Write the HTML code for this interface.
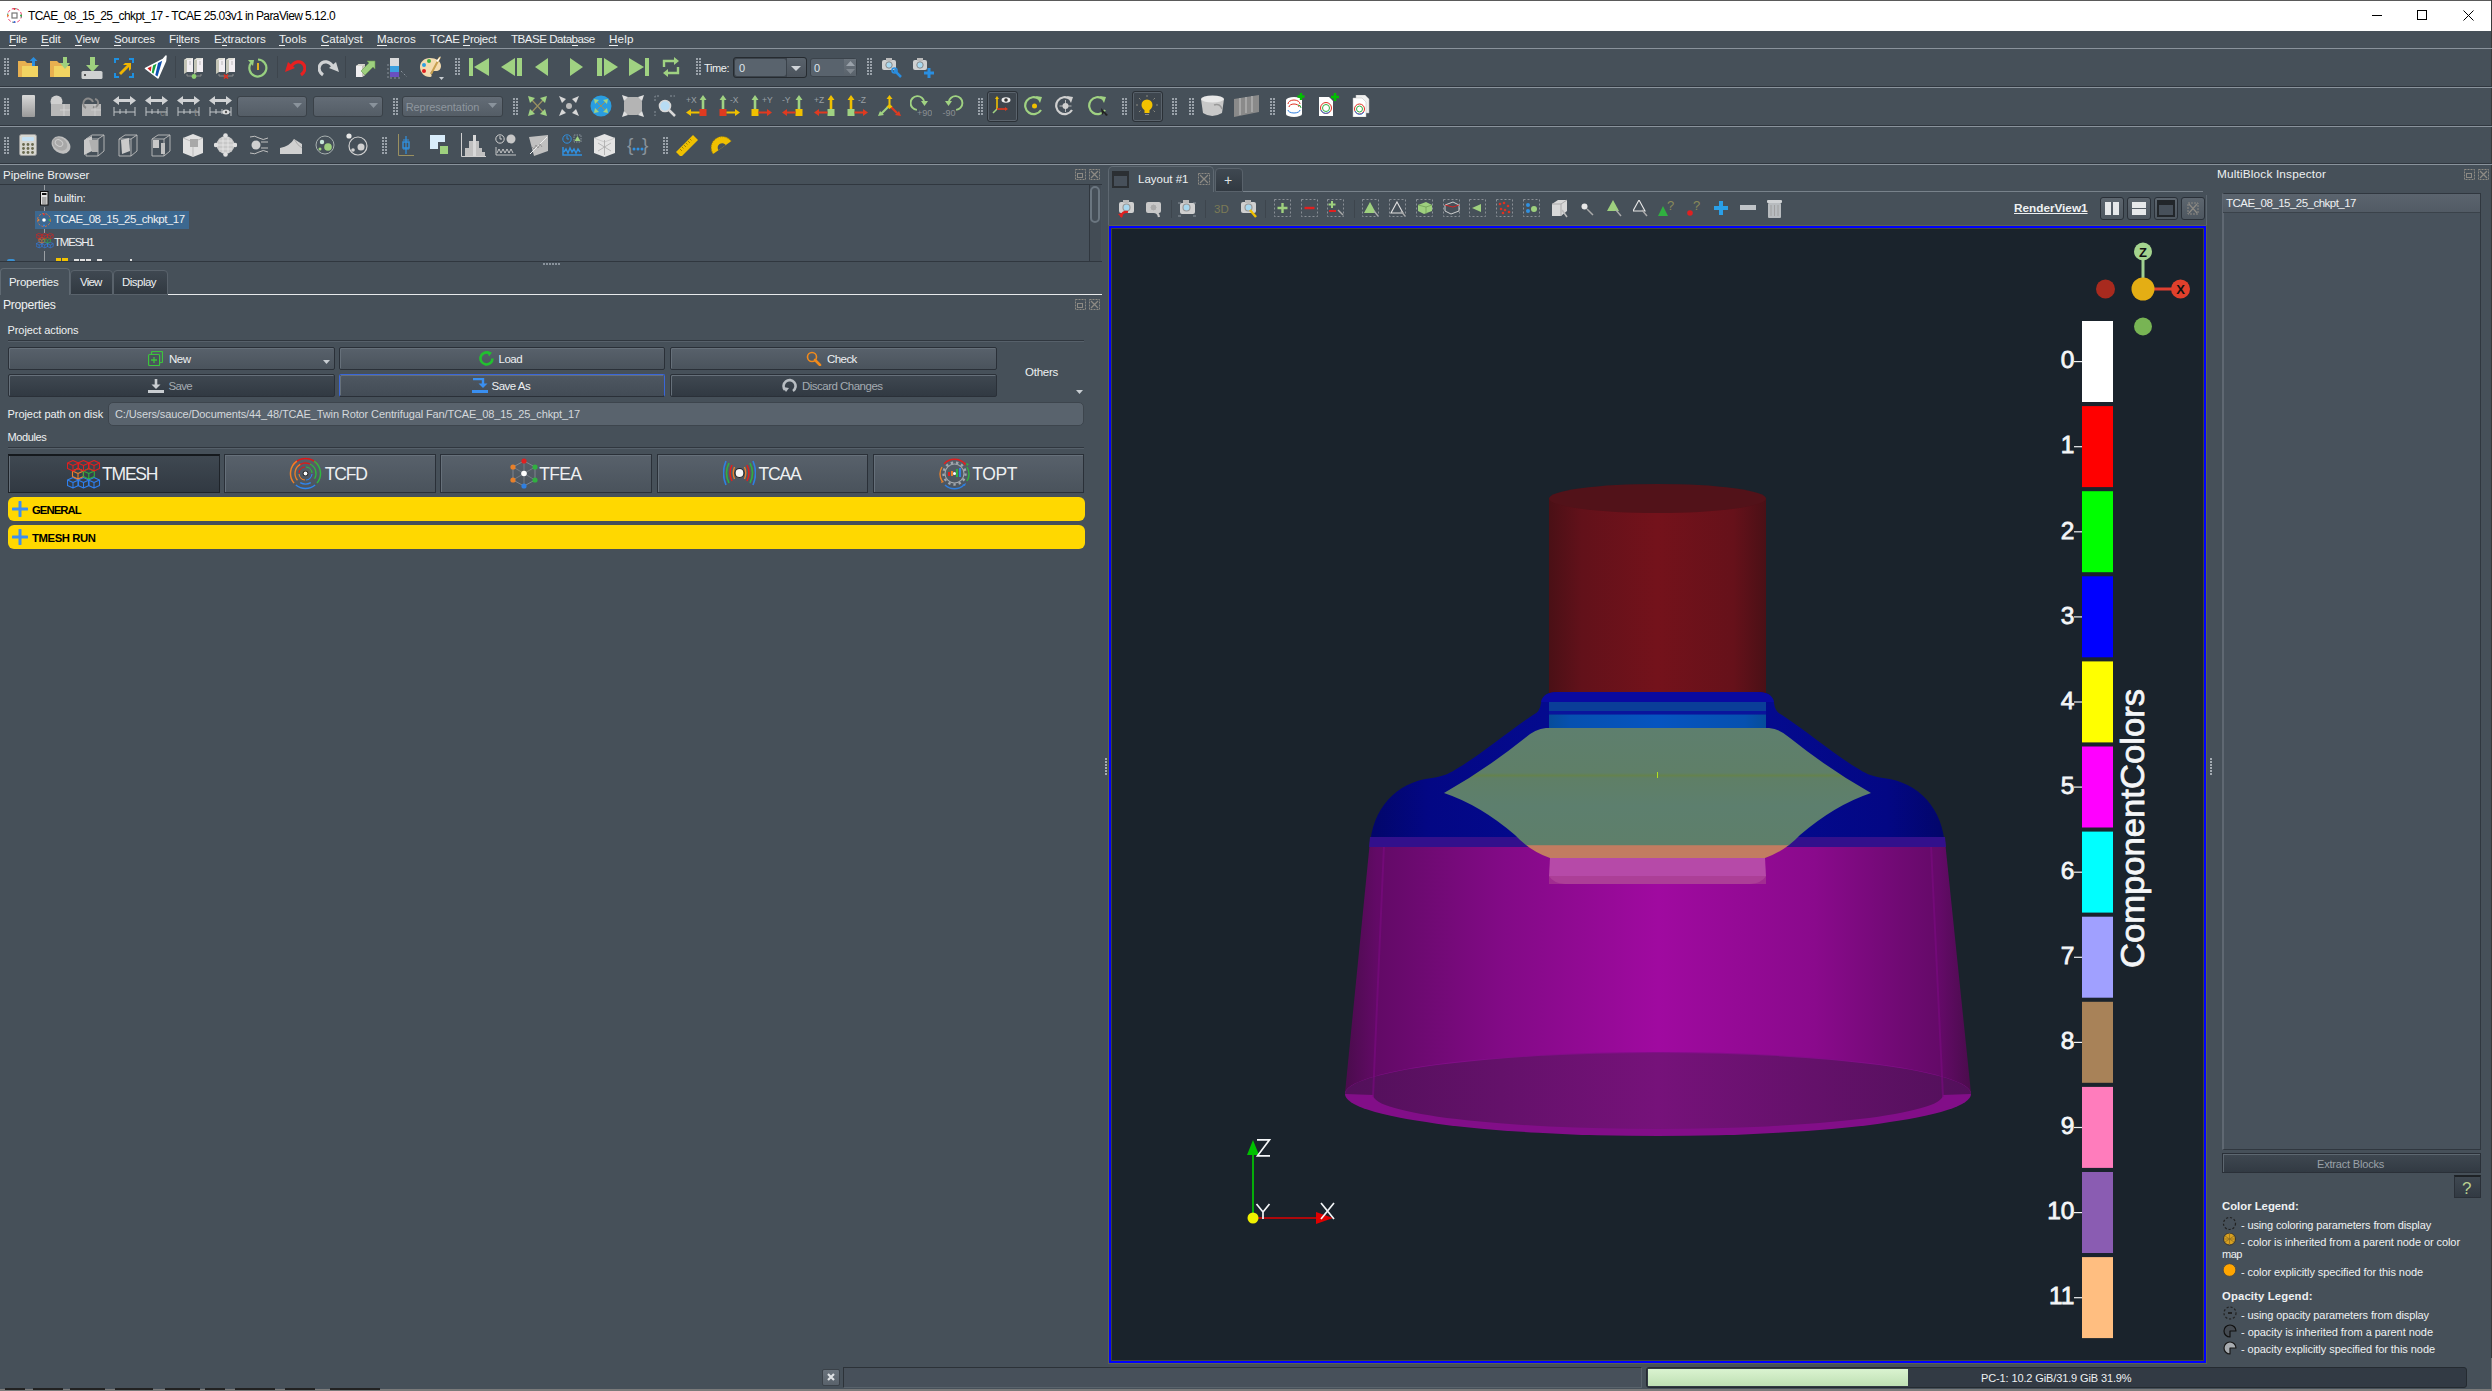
<!DOCTYPE html>
<html><head><meta charset="utf-8">
<style>
*{box-sizing:border-box;margin:0;padding:0}
html,body{width:2492px;height:1391px;overflow:hidden;background:#465059;font-family:"Liberation Sans",sans-serif;font-size:11px;color:#eef0f2}
.a{position:absolute}
.t{position:absolute;white-space:nowrap;line-height:1}
u{text-decoration:none;border-bottom:1px solid currentColor}
</style></head><body>

<div class="a" style="left:0px;top:0px;width:2492px;height:31px;background:#fff"></div>
<div class="a" style="left:0px;top:0px;width:2492px;height:1px;background:#5a5a5a"></div>
<div class="a" style="left:2491px;top:0px;width:1px;height:1358px;background:#3a3a3a"></div>
<div class="a" style="left:2491px;top:1358px;width:1px;height:33px;background:#7a7a7a"></div>
<div class="t" style="left:28px;top:9.84px;font-size:12px;color:#000;letter-spacing:-0.586px">TCAE_08_15_25_chkpt_17 - TCAE 25.03v1 in ParaView 5.12.0</div>
<svg class="a" style="left:6px;top:7px" width="17" height="17" viewBox="0 0 17 17"><circle cx="8.5" cy="8.5" r="7" fill="none" stroke="#e36" stroke-width="1" stroke-dasharray="3 2"/><circle cx="8.5" cy="8.5" r="7" fill="none" stroke="#3a8" stroke-width="1" stroke-dasharray="2 9" /><rect x="6" y="6" width="5" height="5" fill="none" stroke="#777" stroke-width="1.2"/><circle cx="8.5" cy="2" r="1" fill="#d33"/><circle cx="8.5" cy="15" r="1" fill="#36d"/><circle cx="2" cy="8.5" r="1" fill="#e83"/><circle cx="15" cy="8.5" r="1" fill="#3a4"/></svg>
<div class="a" style="left:2372px;top:15px;width:10px;height:1px;background:#000"></div>
<div class="a" style="left:2417px;top:10px;width:10px;height:10px;border:1px solid #000"></div>
<svg class="a" style="left:2463px;top:10px" width="11" height="11" viewBox="0 0 11 11"><path d="M0.5 0.5L10.5 10.5M10.5 0.5L0.5 10.5" stroke="#000" stroke-width="1"/></svg>
<div class="t" style="left:9px;top:33.18px;font-size:11.6px;;letter-spacing:-0.173px"><u>F</u>ile</div>
<div class="t" style="left:41px;top:33.18px;font-size:11.6px;;letter-spacing:-0.072px"><u>E</u>dit</div>
<div class="t" style="left:75px;top:33.18px;font-size:11.6px;;letter-spacing:-0.134px"><u>V</u>iew</div>
<div class="t" style="left:114px;top:33.18px;font-size:11.6px;;letter-spacing:-0.265px"><u>S</u>ources</div>
<div class="t" style="left:169px;top:33.18px;font-size:11.6px;;letter-spacing:-0.140px">Fi<u>l</u>ters</div>
<div class="t" style="left:214px;top:33.18px;font-size:11.6px;;letter-spacing:-0.051px">E<u>x</u>tractors</div>
<div class="t" style="left:279px;top:33.18px;font-size:11.6px;;letter-spacing:0.144px"><u>T</u>ools</div>
<div class="t" style="left:321px;top:33.18px;font-size:11.6px;;letter-spacing:-0.038px"><u>C</u>atalyst</div>
<div class="t" style="left:377px;top:33.18px;font-size:11.6px;;letter-spacing:0.162px"><u>M</u>acros</div>
<div class="t" style="left:430px;top:33.18px;font-size:11.6px;;letter-spacing:-0.330px">TCAE <u>P</u>roject</div>
<div class="t" style="left:511px;top:33.18px;font-size:11.6px;;letter-spacing:-0.515px">TBASE Data<u>b</u>ase</div>
<div class="t" style="left:609px;top:33.18px;font-size:11.6px;;letter-spacing:0.211px"><u>H</u>elp</div>
<div class="a" style="left:0px;top:48px;width:2492px;height:1px;background:#8a939c"></div>
<div class="a" style="left:0px;top:86px;width:2492px;height:1px;background:#30373f"></div>
<div class="a" style="left:0px;top:87px;width:2492px;height:1px;background:#8a939c"></div>
<div class="a" style="left:0px;top:125px;width:2492px;height:1px;background:#30373f"></div>
<div class="a" style="left:0px;top:126px;width:2492px;height:1px;background:#8a939c"></div>
<div class="a" style="left:0px;top:163px;width:2492px;height:1px;background:#30373f"></div>
<div class="a" style="left:0px;top:164px;width:2492px;height:1px;background:#8a939c"></div>
<div class="t" style="left:3px;top:170.27px;font-size:11.5px;;letter-spacing:0.007px">Pipeline Browser</div>
<svg class="a" style="left:1074px;top:168px" width="13" height="13" viewBox="0 0 13 13"><rect x="1.5" y="1.5" width="10" height="10" fill="none" stroke="#8d8a84" stroke-width="1" stroke-dasharray="2 1"/><rect x="3.5" y="5.5" width="5" height="4" fill="none" stroke="#8d8a84"/></svg>
<svg class="a" style="left:1088px;top:168px" width="13" height="13" viewBox="0 0 13 13"><rect x="1.5" y="1.5" width="10" height="10" fill="none" stroke="#8d8a84" stroke-width="1" stroke-dasharray="2 1"/><path d="M3 3L10 10M10 3L3 10" stroke="#8d8a84" stroke-width="1.3"/></svg>
<div class="a" style="left:0px;top:184px;width:1102px;height:78px;background:#47515b;border-top:1px solid #30373f;border-bottom:1px solid #30373f"></div>
<div class="a" style="left:1089px;top:185px;width:12px;height:76px;background:#434c55;border-left:1px solid #30373f"></div>
<div class="a" style="left:1090px;top:186px;width:10px;height:37px;border:2px solid #6b7680;border-radius:5px;background:#454e57"></div>
<div class="a" style="left:44px;top:185px;width:1px;height:5px;background:#9a9fa4"></div>
<div class="a" style="left:44px;top:207px;width:1px;height:4px;background:#9a9fa4"></div>
<div class="a" style="left:44px;top:229px;width:1px;height:4px;background:#9a9fa4"></div>
<div class="a" style="left:44px;top:251px;width:1px;height:10px;background:#9a9fa4"></div>
<svg class="a" style="left:40px;top:191px" width="9" height="15" viewBox="0 0 9 15"><rect x="0.5" y="0.5" width="7.5" height="13.5" fill="#e4e4e4" stroke="#111"/><rect x="2" y="2" width="4.5" height="2" fill="#111"/><rect x="2" y="6" width="4.5" height="7" fill="#a8a8a8"/></svg>
<div class="t" style="left:54px;top:193.27px;font-size:11.5px;;letter-spacing:-0.205px">builtin:</div>
<div class="a" style="left:35px;top:211px;width:154px;height:18px;background:#3c6890"></div>
<svg class="a" style="left:36px;top:212px" width="16" height="16" viewBox="0 0 16 16"><circle cx="8" cy="8" r="6.5" fill="none" stroke="#e0703a" stroke-width="1" stroke-dasharray="2 1.5"/><circle cx="8" cy="8" r="1.8" fill="#fff"/><circle cx="8" cy="2.5" r="1" fill="#d33"/><circle cx="13.5" cy="8" r="1" fill="#3b4"/><circle cx="8" cy="13.5" r="1" fill="#38e"/><circle cx="2.5" cy="8" r="1" fill="#e83"/></svg>
<div class="t" style="left:54px;top:214.27px;font-size:11.5px;;letter-spacing:-0.487px">TCAE_08_15_25_chkpt_17</div>
<svg class="a" style="left:36px;top:233px" width="19" height="16" viewBox="0 0 19 16"><g transform="scale(0.53)"><path d="M6 17.5L11.5 20.0V25.5L6 28.0L0.5 25.5V20.0Z M0.5 20.0L6 22.5L11.5 20.0M6 22.5V28.0" fill="none" stroke="#2f80f0" stroke-width="1.1" stroke-linejoin="round"/><path d="M16.5 17.5L22.0 20.0V25.5L16.5 28.0L11.0 25.5V20.0Z M11.0 20.0L16.5 22.5L22.0 20.0M16.5 22.5V28.0" fill="none" stroke="#2f80f0" stroke-width="1.1" stroke-linejoin="round"/><path d="M27 17.5L32.5 20.0V25.5L27 28.0L21.5 25.5V20.0Z M21.5 20.0L27 22.5L32.5 20.0M27 22.5V28.0" fill="none" stroke="#2f80f0" stroke-width="1.1" stroke-linejoin="round"/><path d="M11 8.5L16.5 11.0V16.5L11 19.0L5.5 16.5V11.0Z M5.5 11.0L11 13.5L16.5 11.0M11 13.5V19.0" fill="none" stroke="#f08030" stroke-width="1.1" stroke-linejoin="round"/><path d="M21.8 8.5L27.3 11.0V16.5L21.8 19.0L16.3 16.5V11.0Z M16.3 11.0L21.8 13.5L27.3 11.0M21.8 13.5V19.0" fill="none" stroke="#30b040" stroke-width="1.1" stroke-linejoin="round"/><path d="M6 0.5L11.5 3.0V8.5L6 11.0L0.5 8.5V3.0Z M0.5 3.0L6 5.5L11.5 3.0M6 5.5V11.0" fill="none" stroke="#e02020" stroke-width="1.1" stroke-linejoin="round"/><path d="M16.5 0.5L22.0 3.0V8.5L16.5 11.0L11.0 8.5V3.0Z M11.0 3.0L16.5 5.5L22.0 3.0M16.5 5.5V11.0" fill="none" stroke="#e02020" stroke-width="1.1" stroke-linejoin="round"/><path d="M27 0.5L32.5 3.0V8.5L27 11.0L21.5 8.5V3.0Z M21.5 3.0L27 5.5L32.5 3.0M27 5.5V11.0" fill="none" stroke="#e02020" stroke-width="1.1" stroke-linejoin="round"/></g></svg>
<div class="t" style="left:54px;top:237.27px;font-size:11.5px;;letter-spacing:-1.191px">TMESH1</div>
<div class="a" style="left:56px;top:258px;width:5px;height:3px;background:#f2c200"></div>
<div class="a" style="left:62px;top:258px;width:6px;height:3px;background:#f2c200"></div>
<div class="a" style="left:74px;top:259px;width:5px;height:2px;background:#e0e0e0"></div>
<div class="a" style="left:80px;top:259px;width:5px;height:2px;background:#e0e0e0"></div>
<div class="a" style="left:86px;top:259px;width:5px;height:2px;background:#e0e0e0"></div>
<div class="a" style="left:97px;top:259px;width:5px;height:2px;background:#e0e0e0"></div>
<div class="a" style="left:130px;top:259px;width:2px;height:2px;background:#e0e0e0"></div>
<div class="a" style="left:7px;top:259px;width:8px;height:2px;background:#3a8fd0;border-radius:3px 3px 0 0"></div>
<svg class="a" style="left:543px;top:263px" width="20" height="3" viewBox="0 0 20 3"><rect x="0" y="0" width="2" height="2" fill="#8a939c"/><rect x="3" y="0" width="2" height="2" fill="#8a939c"/><rect x="6" y="0" width="2" height="2" fill="#8a939c"/><rect x="9" y="0" width="2" height="2" fill="#8a939c"/><rect x="12" y="0" width="2" height="2" fill="#8a939c"/><rect x="15" y="0" width="2" height="2" fill="#8a939c"/></svg>
<div class="a" style="left:0px;top:268px;width:70px;height:27px;background:#465059;border:1px solid #5f6972;border-bottom:none;border-radius:4px 4px 0 0"></div>
<div class="a" style="left:70px;top:270px;width:43px;height:25px;background:linear-gradient(#3f4851,#313941);border:1px solid #59626b;border-radius:4px 4px 0 0"></div>
<div class="a" style="left:113px;top:270px;width:55px;height:25px;background:linear-gradient(#3f4851,#313941);border:1px solid #59626b;border-radius:4px 4px 0 0"></div>
<div class="a" style="left:168px;top:294px;width:934px;height:1px;background:#e8eaec"></div>
<div class="t" style="left:9px;top:277.27px;font-size:11.5px;;letter-spacing:-0.301px">Properties</div>
<div class="t" style="left:80px;top:277.27px;font-size:11.5px;;letter-spacing:-0.805px">View</div>
<div class="t" style="left:122px;top:277.27px;font-size:11.5px;;letter-spacing:-0.515px">Display</div>
<div class="t" style="left:3px;top:298.67px;font-size:12.2px;;letter-spacing:-0.301px">Properties</div>
<svg class="a" style="left:1074px;top:298px" width="13" height="13" viewBox="0 0 13 13"><rect x="1.5" y="1.5" width="10" height="10" fill="none" stroke="#8d8a84" stroke-width="1" stroke-dasharray="2 1"/><rect x="3.5" y="5.5" width="5" height="4" fill="none" stroke="#8d8a84"/></svg>
<svg class="a" style="left:1088px;top:298px" width="13" height="13" viewBox="0 0 13 13"><rect x="1.5" y="1.5" width="10" height="10" fill="none" stroke="#8d8a84" stroke-width="1" stroke-dasharray="2 1"/><path d="M3 3L10 10M10 3L3 10" stroke="#8d8a84" stroke-width="1.3"/></svg>
<div class="t" style="left:7.5px;top:324.69px;font-size:11px;;letter-spacing:-0.076px">Project actions</div>
<div class="a" style="left:8px;top:340px;width:1076px;height:1px;background:#30373f"></div>
<div class="a" style="left:8px;top:341px;width:1076px;height:1px;background:#56606a"></div>
<div class="a" style="left:8px;top:347px;width:327px;height:23px;background:linear-gradient(#58616b,#4a535c);border:1px solid #2a3038;border-radius:2px;box-shadow:inset 1px 1px 0 #66707a"></div>
<div class="a" style="left:339px;top:347px;width:326px;height:23px;background:linear-gradient(#58616b,#4a535c);border:1px solid #2a3038;border-radius:2px;box-shadow:inset 1px 1px 0 #66707a"></div>
<div class="a" style="left:670px;top:347px;width:327px;height:23px;background:linear-gradient(#58616b,#4a535c);border:1px solid #2a3038;border-radius:2px;box-shadow:inset 1px 1px 0 #66707a"></div>
<div class="a" style="left:8px;top:374px;width:327px;height:23px;background:linear-gradient(#3f4851,#313942);border:1px solid #2a3038;border-radius:2px;box-shadow:inset 1px 1px 0 #66707a"></div>
<div class="a" style="left:339px;top:374px;width:326px;height:23px;background:linear-gradient(#4e5761,#434c56);border:1px solid #2a3038;border-radius:2px;box-shadow:inset 1px 1px 0 #66707a"></div>
<div class="a" style="left:339px;top:374px;width:326px;height:23px;border:1px solid #3a66d8;border-bottom-color:#2a3038;border-radius:2px"></div>
<div class="a" style="left:670px;top:374px;width:327px;height:23px;background:linear-gradient(#3f4851,#313942);border:1px solid #2a3038;border-radius:2px;box-shadow:inset 1px 1px 0 #66707a"></div>
<svg class="a" style="left:148px;top:351px" width="15" height="15" viewBox="0 0 15 15"><rect x="3.5" y="0.5" width="11" height="11" fill="none" stroke="#3cc43c" stroke-width="1.2" rx="1"/><rect x="0.6" y="3.5" width="11" height="11" fill="#4a535c" stroke="#3cc43c" stroke-width="1.2" rx="1"/><path d="M6 6v6M3 9h6" stroke="#3cc43c" stroke-width="1.3"/></svg>
<div class="t" style="left:169px;top:354.27px;font-size:11.5px;;letter-spacing:-0.469px">New</div>
<svg class="a" style="left:323px;top:360px" width="7" height="4" viewBox="0 0 7 4"><path d="M0 0h7L3.5 4z" fill="#c8cdd2"/></svg>
<svg class="a" style="left:479px;top:351px" width="16" height="15" viewBox="0 0 16 15"><path d="M13.5 7.5A6 6 0 1 1 10 2" fill="none" stroke="#22c030" stroke-width="2.6"/><path d="M8 0l5 1.5-3 4z" fill="#22c030"/></svg>
<div class="t" style="left:498.5px;top:354.27px;font-size:11.5px;;letter-spacing:-0.496px">Load</div>
<svg class="a" style="left:806px;top:351px" width="16" height="15" viewBox="0 0 16 15"><circle cx="6" cy="6" r="4.5" fill="none" stroke="#f08a1c" stroke-width="1.6"/><path d="M9 9l5 5" stroke="#f08a1c" stroke-width="2.6" stroke-linecap="round"/></svg>
<div class="t" style="left:827px;top:354.27px;font-size:11.5px;;letter-spacing:-0.559px">Check</div>
<svg class="a" style="left:148px;top:379px" width="16" height="14" viewBox="0 0 16 14"><path d="M8 0v7" stroke="#c9cdd1" stroke-width="2.6"/><path d="M3.5 5.5h9L8 10z" fill="#c9cdd1"/><rect x="0" y="11" width="16" height="3" fill="#c9cdd1"/></svg>
<div class="t" style="left:168.5px;top:381.27px;font-size:11.5px;color:#a4abb2;letter-spacing:-0.653px">Save</div>
<svg class="a" style="left:472px;top:378px" width="16" height="15" viewBox="0 0 16 15"><path d="M1 1h10v5" fill="none" stroke="#3a8ff0" stroke-width="2.4"/><path d="M6.5 5.5h9L11 10z" fill="#3a8ff0"/><rect x="0" y="12" width="16" height="3" fill="#3a8ff0"/></svg>
<div class="t" style="left:491.5px;top:381.27px;font-size:11.5px;;letter-spacing:-0.485px">Save As</div>
<svg class="a" style="left:782px;top:378px" width="16" height="16" viewBox="0 0 16 16"><path d="M3 12A6 6 0 1 1 11 13" fill="none" stroke="#b8bdc2" stroke-width="2.6"/><path d="M1 9l3 5 3-4z" fill="#b8bdc2"/></svg>
<div class="t" style="left:802px;top:381.27px;font-size:11.5px;color:#a4abb2;letter-spacing:-0.514px">Discard Changes</div>
<div class="t" style="left:1025px;top:367.27px;font-size:11.5px;;letter-spacing:-0.252px">Others</div>
<svg class="a" style="left:1076px;top:390px" width="7" height="4" viewBox="0 0 7 4"><path d="M0 0h7L3.5 4z" fill="#c8cdd2"/></svg>
<div class="t" style="left:7.5px;top:408.69px;font-size:11px;;letter-spacing:-0.051px">Project path on disk</div>
<div class="a" style="left:108px;top:402px;width:976px;height:24px;background:#59636d;border:1px solid #3d454d;border-radius:5px"></div>
<div class="t" style="left:115px;top:408.69px;font-size:11px;color:#d4d8dc;letter-spacing:-0.119px">C:/Users/sauce/Documents/44_48/TCAE_Twin Rotor Centrifugal Fan/TCAE_08_15_25_chkpt_17</div>
<div class="t" style="left:7.5px;top:431.69px;font-size:11px;;letter-spacing:-0.368px">Modules</div>
<div class="a" style="left:8px;top:447px;width:1076px;height:1px;background:#30373f"></div>
<div class="a" style="left:8px;top:448px;width:1076px;height:1px;background:#56606a"></div>
<div class="a" style="left:8px;top:454px;width:212px;height:39px;background:linear-gradient(#3f4851,#313942);border:1px solid #1e2329;border-top:2px solid #15191d;box-shadow:inset 1px 0 0 #66707a"></div>
<div class="a" style="left:224px;top:454px;width:212px;height:39px;background:linear-gradient(#58616b,#4a535c);border:1px solid #2a3038;box-shadow:inset 1px 1px 0 #66707a"></div>
<div class="a" style="left:440px;top:454px;width:212px;height:39px;background:linear-gradient(#58616b,#4a535c);border:1px solid #2a3038;box-shadow:inset 1px 1px 0 #66707a"></div>
<div class="a" style="left:657px;top:454px;width:211px;height:39px;background:linear-gradient(#58616b,#4a535c);border:1px solid #2a3038;box-shadow:inset 1px 1px 0 #66707a"></div>
<div class="a" style="left:873px;top:454px;width:211px;height:39px;background:linear-gradient(#58616b,#4a535c);border:1px solid #2a3038;box-shadow:inset 1px 1px 0 #66707a"></div>
<svg class="a" style="left:67px;top:460px" width="35" height="30" viewBox="0 0 35 30"><g transform="scale(1.0)"><path d="M6 17.5L11.5 20.0V25.5L6 28.0L0.5 25.5V20.0Z M0.5 20.0L6 22.5L11.5 20.0M6 22.5V28.0" fill="none" stroke="#2f80f0" stroke-width="1.1" stroke-linejoin="round"/><path d="M16.5 17.5L22.0 20.0V25.5L16.5 28.0L11.0 25.5V20.0Z M11.0 20.0L16.5 22.5L22.0 20.0M16.5 22.5V28.0" fill="none" stroke="#2f80f0" stroke-width="1.1" stroke-linejoin="round"/><path d="M27 17.5L32.5 20.0V25.5L27 28.0L21.5 25.5V20.0Z M21.5 20.0L27 22.5L32.5 20.0M27 22.5V28.0" fill="none" stroke="#2f80f0" stroke-width="1.1" stroke-linejoin="round"/><path d="M11 8.5L16.5 11.0V16.5L11 19.0L5.5 16.5V11.0Z M5.5 11.0L11 13.5L16.5 11.0M11 13.5V19.0" fill="none" stroke="#f08030" stroke-width="1.1" stroke-linejoin="round"/><path d="M21.8 8.5L27.3 11.0V16.5L21.8 19.0L16.3 16.5V11.0Z M16.3 11.0L21.8 13.5L27.3 11.0M21.8 13.5V19.0" fill="none" stroke="#30b040" stroke-width="1.1" stroke-linejoin="round"/><path d="M6 0.5L11.5 3.0V8.5L6 11.0L0.5 8.5V3.0Z M0.5 3.0L6 5.5L11.5 3.0M6 5.5V11.0" fill="none" stroke="#e02020" stroke-width="1.1" stroke-linejoin="round"/><path d="M16.5 0.5L22.0 3.0V8.5L16.5 11.0L11.0 8.5V3.0Z M11.0 3.0L16.5 5.5L22.0 3.0M16.5 5.5V11.0" fill="none" stroke="#e02020" stroke-width="1.1" stroke-linejoin="round"/><path d="M27 0.5L32.5 3.0V8.5L27 11.0L21.5 8.5V3.0Z M21.5 3.0L27 5.5L32.5 3.0M27 5.5V11.0" fill="none" stroke="#e02020" stroke-width="1.1" stroke-linejoin="round"/></g></svg>
<div class="t" style="left:102px;top:466.19px;font-size:17.5px;;letter-spacing:-1.191px">TMESH</div>
<svg class="a" style="left:289px;top:457px" width="33" height="33" viewBox="0 0 33 33"><path d="M4.21 7.90A15 15 0 0 1 28.79 7.90" fill="none" stroke="#e01818" stroke-width="1.5"/><path d="M25.10 4.21A15 15 0 0 1 27.99 26.14" fill="none" stroke="#30b840" stroke-width="1.5"/><path d="M26.14 27.99A15 15 0 0 1 6.86 27.99" fill="none" stroke="#2f86f0" stroke-width="1.5"/><path d="M5.01 26.14A15 15 0 0 1 7.90 4.21" fill="none" stroke="#f08028" stroke-width="1.5"/><path d="M8.46 9.75A10.5 10.5 0 0 1 21.75 7.41" fill="none" stroke="#e01818" stroke-width="1.3"/><path d="M20.94 6.98A10.5 10.5 0 0 1 25.59 21.75" fill="none" stroke="#30b840" stroke-width="1.3"/><path d="M21.75 25.59A10.5 10.5 0 0 1 11.25 25.59" fill="none" stroke="#2f86f0" stroke-width="1.3"/><path d="M8.46 23.25A10.5 10.5 0 0 1 11.25 7.41" fill="none" stroke="#f08028" stroke-width="1.3"/><path d="M10.02 15.93A6.5 6.5 0 0 1 15.93 10.02" fill="none" stroke="#e01818" stroke-width="1.1"/><path d="M17.07 10.02A6.5 6.5 0 0 1 22.98 15.93" fill="none" stroke="#30b840" stroke-width="1.1"/><path d="M22.98 17.07A6.5 6.5 0 0 1 17.07 22.98" fill="none" stroke="#2f86f0" stroke-width="1.1"/><path d="M15.93 22.98A6.5 6.5 0 0 1 10.02 17.07" fill="none" stroke="#f08028" stroke-width="1.1"/><circle cx="16.5" cy="16.5" r="2.8" fill="#222"/><circle cx="16.5" cy="16.5" r="1.9" fill="#fff"/></svg>
<div class="t" style="left:324.7px;top:466.19px;font-size:17.5px;;letter-spacing:-1.164px">TCFD</div>
<svg class="a" style="left:509px;top:457px" width="30" height="33" viewBox="0 0 30 33"><path d="M15 4L26 10V23L15 29L4 23V10Z" fill="none" stroke="#8a9199" stroke-width="0.8"/><path d="M15 4V29M4 10L26 23M26 10L4 23" stroke="#8a9199" stroke-width="0.6"/><circle cx="15" cy="4" r="2.6" fill="#e02020"/><circle cx="26" cy="10" r="2.6" fill="#30b040"/><circle cx="26" cy="23" r="2.6" fill="#30b040"/><circle cx="15" cy="29" r="2.6" fill="#2f7fe0"/><circle cx="4" cy="23" r="2.6" fill="#e8802a"/><circle cx="4" cy="10" r="2.6" fill="#e8802a"/><circle cx="15" cy="16.5" r="2.8" fill="#fff"/></svg>
<div class="t" style="left:539.3px;top:466.19px;font-size:17.5px;;letter-spacing:-0.682px">TFEA</div>
<svg class="a" style="left:723px;top:459px" width="33" height="28" viewBox="0 0 33 28"><circle cx="16.5" cy="14" r="4.5" fill="#f4f4f4" stroke="#222" stroke-width="1.2"/><path d="M9 6Q5 14 9 22M24 6Q28 14 24 22" fill="none" stroke="#e02020" stroke-width="1.6"/><path d="M6 4Q1 14 6 24M27 4Q32 14 27 24" fill="none" stroke="#30b040" stroke-width="1.6"/><path d="M3 2Q-2 14 3 26M30 2Q35 14 30 26" fill="none" stroke="#2f7fe0" stroke-width="1.6"/><path d="M11.5 8Q9 14 11.5 20M21.5 8Q24 14 21.5 20" fill="none" stroke="#e8802a" stroke-width="1.4"/></svg>
<div class="t" style="left:758.4px;top:466.19px;font-size:17.5px;;letter-spacing:-1.094px">TCAA</div>
<svg class="a" style="left:938px;top:457px" width="33" height="33" viewBox="0 0 33 33"><path d="M6 7A14 14 0 0 1 27 7" fill="none" stroke="#e02020" stroke-width="1.4"/><path d="M29 10A14 14 0 0 1 29 24" fill="none" stroke="#30b040" stroke-width="1.4"/><path d="M26 28A14 14 0 0 1 7 28" fill="none" stroke="#2f7fe0" stroke-width="1.4"/><path d="M4 24A14 14 0 0 1 4 10" fill="none" stroke="#e8802a" stroke-width="1.4"/><path d="M25 5l3 1-1 3z" fill="#e02020"/><path d="M28 26l-1 3-3-1z" fill="#2f7fe0"/><path d="M3 26l1-3 2 2z" fill="#e8802a"/><path d="M29 9l-1-3 3 1z" fill="#30b040"/><circle cx="16.5" cy="16.5" r="9.5" fill="none" stroke="#a0a6ac" stroke-width="1.1"/><circle cx="16.5" cy="16.5" r="11" fill="none" stroke="#a0a6ac" stroke-width="2.4" stroke-dasharray="2.4 2.9"/><rect x="10" y="15" width="2" height="4" fill="#e02020"/><rect x="13" y="14" width="2" height="5" fill="#e8802a"/><rect x="18" y="12" width="2" height="8" fill="#30b040"/><rect x="21" y="11" width="2" height="9" fill="#2f7fe0"/><circle cx="16.5" cy="16.5" r="1.5" fill="#fff"/></svg>
<div class="t" style="left:972.3px;top:466.19px;font-size:17.5px;;letter-spacing:-0.412px">TOPT</div>
<div class="a" style="left:8px;top:497px;width:1077px;height:24px;background:#ffd800;border-radius:6px"></div>
<svg class="a" style="left:12px;top:501px" width="16" height="16" viewBox="0 0 16 16"><path d="M8 1v14M1 8h14" stroke="#3d8ef0" stroke-width="3" stroke-linecap="round"/></svg>
<div class="t" style="left:32px;top:504.73px;font-size:11.3px;color:#000;font-weight:bold;letter-spacing:-0.950px">GENERAL</div>
<div class="a" style="left:8px;top:525px;width:1077px;height:24px;background:#ffd800;border-radius:6px"></div>
<svg class="a" style="left:12px;top:529px" width="16" height="16" viewBox="0 0 16 16"><path d="M8 1v14M1 8h14" stroke="#3d8ef0" stroke-width="3" stroke-linecap="round"/></svg>
<div class="t" style="left:32px;top:532.73px;font-size:11.3px;color:#000;font-weight:bold;letter-spacing:-0.397px">TMESH RUN</div>
<svg class="a" style="left:1105px;top:758px" width="3" height="18" viewBox="0 0 3 18"><rect x="0" y="0" width="2" height="2" fill="#a4abb2"/><rect x="0" y="3" width="2" height="2" fill="#a4abb2"/><rect x="0" y="6" width="2" height="2" fill="#a4abb2"/><rect x="0" y="9" width="2" height="2" fill="#a4abb2"/><rect x="0" y="12" width="2" height="2" fill="#a4abb2"/><rect x="0" y="15" width="2" height="2" fill="#a4abb2"/></svg>
<svg class="a" style="left:2210px;top:758px" width="3" height="18" viewBox="0 0 3 18"><rect x="0" y="0" width="2" height="2" fill="#a4abb2"/><rect x="0" y="3" width="2" height="2" fill="#a4abb2"/><rect x="0" y="6" width="2" height="2" fill="#a4abb2"/><rect x="0" y="9" width="2" height="2" fill="#a4abb2"/><rect x="0" y="12" width="2" height="2" fill="#a4abb2"/><rect x="0" y="15" width="2" height="2" fill="#a4abb2"/></svg>
<div class="a" style="left:1108px;top:166px;width:106px;height:26px;background:#465059;border:1px solid #5f6972;border-bottom:none;border-radius:5px 5px 0 0"></div>
<div class="a" style="left:1215px;top:168px;width:28px;height:24px;background:linear-gradient(#3f4851,#313941);border:1px solid #59626b;border-radius:4px 4px 0 0"></div>
<div class="a" style="left:1243px;top:191px;width:960px;height:1px;background:#78828b"></div>
<svg class="a" style="left:1112px;top:171px" width="17" height="17" viewBox="0 0 17 17"><rect x="1" y="1" width="15" height="15" fill="#47505a" stroke="#2b2f33" stroke-width="2"/><rect x="0" y="0" width="17" height="5" fill="#2b2f33"/></svg>
<div class="t" style="left:1138px;top:174.27px;font-size:11.5px;;letter-spacing:-0.002px">Layout #1</div>
<svg class="a" style="left:1198px;top:173px" width="12" height="12" viewBox="0 0 12 12"><rect x="0.5" y="0.5" width="11" height="11" fill="none" stroke="#8d8a84" stroke-dasharray="2 1"/><path d="M2 2L10 10M10 2L2 10" stroke="#8d8a84" stroke-width="1.2"/></svg>
<div class="t" style="left:1224px;top:173.15px;font-size:14px;color:#dfe3e6">+</div>
<div class="a" style="left:1108px;top:191px;width:1px;height:35px;background:#5d6770"></div>
<div class="a" style="left:2206px;top:195px;width:1px;height:31px;background:#5d6770"></div>
<div class="t" style="left:2014px;top:203.01px;font-size:11.8px;font-weight:bold;text-decoration:underline;letter-spacing:-0.027px">RenderView1</div>
<div class="a" style="left:2100px;top:197px;width:24px;height:23px;background:linear-gradient(#5d666f,#4e5760);border:1px solid #2a3038;border-radius:3px"></div>
<svg class="a" style="left:2100px;top:197px" width="24" height="23" viewBox="0 0 24 23"><rect x="5" y="5" width="6" height="13" fill="#e6e8ea"/><rect x="13" y="5" width="6" height="13" fill="#e6e8ea"/></svg>
<div class="a" style="left:2127px;top:197px;width:24px;height:23px;background:linear-gradient(#5d666f,#4e5760);border:1px solid #2a3038;border-radius:3px"></div>
<svg class="a" style="left:2127px;top:197px" width="24" height="23" viewBox="0 0 24 23"><rect x="5" y="5" width="14" height="6" fill="#e6e8ea"/><rect x="5" y="12" width="14" height="6" fill="#e6e8ea"/></svg>
<div class="a" style="left:2154px;top:197px;width:24px;height:23px;background:linear-gradient(#5d666f,#4e5760);border:1px solid #2a3038;border-radius:3px"></div>
<svg class="a" style="left:2154px;top:197px" width="24" height="23" viewBox="0 0 24 23"><rect x="4" y="4" width="16" height="15" fill="#47505a" stroke="#22262a" stroke-width="2"/><rect x="4" y="4" width="16" height="4" fill="#22262a"/></svg>
<div class="a" style="left:2181px;top:197px;width:24px;height:23px;background:linear-gradient(#5d666f,#4e5760);border:1px solid #2a3038;border-radius:3px"></div>
<svg class="a" style="left:2181px;top:197px" width="24" height="23" viewBox="0 0 24 23"><rect x="7" y="6" width="10" height="11" fill="none" stroke="#8d8a84" stroke-dasharray="2 1"/><path d="M8 7L16 16M16 7L8 16" stroke="#8d8a84" stroke-width="1.2"/></svg>
<div class="a" style="left:1108px;top:225px;width:1099px;height:1139px;border:1px solid #5b6150"></div>
<div class="a" style="left:1109px;top:226px;width:1097px;height:1137px;background:#1a232c;border:2px solid #0000ff;box-shadow:inset 0 0 0 1px #3e4536"></div>
<svg class="a" style="left:0;top:0" width="2492" height="1391" viewBox="0 0 2492 1391"><clipPath id="rv"><rect x="1111" y="228" width="1093" height="1133"/></clipPath><g clip-path="url(#rv)">
<defs>
<linearGradient id="gMag" gradientUnits="userSpaceOnUse" x1="1345" y1="0" x2="1971" y2="0">
 <stop offset="0" stop-color="#4a0c4c"/><stop offset="0.05" stop-color="#620a66"/><stop offset="0.25" stop-color="#820a86"/><stop offset="0.5" stop-color="#a00aa0"/><stop offset="0.75" stop-color="#8a0a8c"/><stop offset="0.95" stop-color="#640a68"/><stop offset="1" stop-color="#4a0c4c"/>
</linearGradient>
<linearGradient id="gMagB" gradientUnits="userSpaceOnUse" x1="1345" y1="0" x2="1971" y2="0">
 <stop offset="0" stop-color="#52105a"/><stop offset="0.5" stop-color="#76127a"/><stop offset="1" stop-color="#52105a"/>
</linearGradient>
<linearGradient id="gRed" gradientUnits="userSpaceOnUse" x1="1549" y1="0" x2="1766" y2="0">
 <stop offset="0" stop-color="#4a1016"/><stop offset="0.15" stop-color="#62111a"/><stop offset="0.5" stop-color="#74121b"/><stop offset="0.85" stop-color="#66111a"/><stop offset="1" stop-color="#4a1016"/>
</linearGradient>
<linearGradient id="gBlue" gradientUnits="userSpaceOnUse" x1="1371" y1="0" x2="1944" y2="0">
 <stop offset="0" stop-color="#02066a"/><stop offset="0.1" stop-color="#030784"/><stop offset="0.3" stop-color="#040a8e"/><stop offset="0.5" stop-color="#040c98"/><stop offset="0.7" stop-color="#040a8e"/><stop offset="0.9" stop-color="#030784"/><stop offset="1" stop-color="#02066a"/>
</linearGradient>
<linearGradient id="gGreen" gradientUnits="userSpaceOnUse" x1="0" y1="728" x2="0" y2="858">
 <stop offset="0" stop-color="#5e7f6e"/><stop offset="0.345" stop-color="#5f7f68"/><stop offset="0.365" stop-color="#64824e"/><stop offset="0.385" stop-color="#5f7f66"/><stop offset="0.6" stop-color="#5d7f6e"/><stop offset="0.9" stop-color="#5e7f6a"/><stop offset="0.905" stop-color="#c27c60"/><stop offset="1" stop-color="#c27c62"/>
</linearGradient>
<linearGradient id="gCyan" gradientUnits="userSpaceOnUse" x1="1549" y1="0" x2="1766" y2="0"><stop offset="0" stop-color="#064c9a"/><stop offset="0.1" stop-color="#0650b0"/><stop offset="0.5" stop-color="#0654c0"/><stop offset="0.9" stop-color="#0650b0"/><stop offset="1" stop-color="#064c9a"/></linearGradient>
</defs>
<path d="M1370 841 L1945 841 L1971 1093 A313 42 0 0 1 1345 1093 Z" fill="url(#gMag)"/><ellipse cx="1658" cy="1094" rx="313" ry="42" fill="#820e88"/><path d="M1345 1094 A313 41 0 0 1 1971 1094 L1943 1095 A285 34 0 0 1 1373 1095 Z" fill="url(#gMagB)"/><path d="M1384 845 L1373 1097" stroke="#7c0a82" stroke-width="2" opacity="0.6"/><path d="M1931 845 L1943 1097" stroke="#7c0a82" stroke-width="2" opacity="0.6"/><rect x="1549" y="498" width="217" height="200" fill="url(#gRed)"/><ellipse cx="1657.5" cy="498.5" rx="108.5" ry="14.5" fill="#521219"/><path d="M1557 692 Q1543 692 1541 703 Q1540 712 1533 715 C1510 730 1480 755 1458 768 C1450 773 1445 776 1432 778 C1395 782 1372 810 1370 846 L1945 846 C1943 810 1920 782 1883 778 C1870 776 1865 773 1857 768 C1835 755 1805 730 1782 715 Q1775 712 1774 703 Q1772 692 1758 692 Z" fill="url(#gBlue)"/><path d="M1370 837 L1945 837 L1946 847 L1369 847 Z" fill="#32108c"/><path d="M1557 692 L1758 692 Q1772 692 1774 702 L1541 702 Q1543 692 1557 692Z" fill="#0a0aa0"/><rect x="1549" y="702" width="217" height="9" fill="#0a3e98"/><rect x="1549" y="711" width="217" height="3.5" fill="#0a149c"/><rect x="1549" y="714.5" width="217" height="14" fill="url(#gCyan)"/><path d="M1546 728 L1769 728 Q1780 729 1790 738 Q1830 770 1871 793 Q1835 805 1800 835 Q1785 851 1765 858 L1550 858 Q1530 851 1515 835 Q1480 805 1444 793 Q1485 770 1525 738 Q1535 729 1546 728 Z" fill="url(#gGreen)"/><path d="M1550 858 L1765 858 L1766 876 Q1762 883 1750 884 L1565 884 Q1553 883 1549 876 Z" fill="#b64aa8"/><rect x="1549" y="876" width="217" height="8" fill="#a83a90" opacity="0.7"/><rect x="1657" y="772" width="1" height="6" fill="#b0e020"/><path d="M1253 1218 L1253 1153" stroke="#00d000" stroke-width="1.6"/><path d="M1247 1155 L1253 1140 L1259 1155 Z" fill="#00c000"/><path d="M1253 1218 L1318 1218" stroke="#e00000" stroke-width="1.6"/><path d="M1316 1212 L1333 1218 L1316 1224 Z" fill="#e00000"/><circle cx="1253" cy="1218" r="5.5" fill="#f0f000"/><path d="M1257 1139.8H1269.5L1257.5 1155.8H1270" fill="none" stroke="#f4f6f8" stroke-width="1.7"/><path d="M1256.5 1204L1263 1212L1269.5 1204M1263 1212V1219" fill="none" stroke="#f4f6f8" stroke-width="1.7"/><path d="M1321 1203L1334 1219M1334 1203L1321 1219" fill="none" stroke="#f4f6f8" stroke-width="1.7"/><path d="M2143 289 L2143 252" stroke="#a0d090" stroke-width="3"/><path d="M2143 289 L2180 289" stroke="#e04030" stroke-width="3"/><circle cx="2105.5" cy="289" r="9.5" fill="#a82a1e"/><circle cx="2143" cy="326.5" r="9" fill="#78b454"/><circle cx="2143" cy="289" r="11.5" fill="#e4ae14"/><circle cx="2143" cy="251.5" r="9" fill="#a4d48e"/><circle cx="2180.5" cy="289" r="9.5" fill="#e0402c"/><text x="2143" y="256.5" text-anchor="middle" font-family="Liberation Sans" font-weight="bold" font-size="13" fill="#111">Z</text><text x="2180.5" y="294" text-anchor="middle" font-family="Liberation Sans" font-weight="bold" font-size="13" fill="#111">X</text><rect x="2082" y="321.0" width="31" height="81" fill="#ffffff"/><rect x="2074" y="361.0" width="8" height="1.2" fill="#eef0f2"/><text x="2074.5" y="368.3" text-anchor="end" font-family="Liberation Sans" font-size="24.5" fill="#f4f6f8" stroke="#f4f6f8" stroke-width="0.8">0</text><rect x="2082" y="406.1" width="31" height="81" fill="#ff0000"/><rect x="2074" y="446.1" width="8" height="1.2" fill="#eef0f2"/><text x="2074.5" y="453.40000000000003" text-anchor="end" font-family="Liberation Sans" font-size="24.5" fill="#f4f6f8" stroke="#f4f6f8" stroke-width="0.8">1</text><rect x="2082" y="491.2" width="31" height="81" fill="#00ff00"/><rect x="2074" y="531.2" width="8" height="1.2" fill="#eef0f2"/><text x="2074.5" y="538.5" text-anchor="end" font-family="Liberation Sans" font-size="24.5" fill="#f4f6f8" stroke="#f4f6f8" stroke-width="0.8">2</text><rect x="2082" y="576.3" width="31" height="81" fill="#0000ff"/><rect x="2074" y="616.3" width="8" height="1.2" fill="#eef0f2"/><text x="2074.5" y="623.5999999999999" text-anchor="end" font-family="Liberation Sans" font-size="24.5" fill="#f4f6f8" stroke="#f4f6f8" stroke-width="0.8">3</text><rect x="2082" y="661.4" width="31" height="81" fill="#ffff00"/><rect x="2074" y="701.4" width="8" height="1.2" fill="#eef0f2"/><text x="2074.5" y="708.6999999999999" text-anchor="end" font-family="Liberation Sans" font-size="24.5" fill="#f4f6f8" stroke="#f4f6f8" stroke-width="0.8">4</text><rect x="2082" y="746.5" width="31" height="81" fill="#ff00ff"/><rect x="2074" y="786.5" width="8" height="1.2" fill="#eef0f2"/><text x="2074.5" y="793.8" text-anchor="end" font-family="Liberation Sans" font-size="24.5" fill="#f4f6f8" stroke="#f4f6f8" stroke-width="0.8">5</text><rect x="2082" y="831.6" width="31" height="81" fill="#00ffff"/><rect x="2074" y="871.6" width="8" height="1.2" fill="#eef0f2"/><text x="2074.5" y="878.9" text-anchor="end" font-family="Liberation Sans" font-size="24.5" fill="#f4f6f8" stroke="#f4f6f8" stroke-width="0.8">6</text><rect x="2082" y="916.7" width="31" height="81" fill="#a0a0ff"/><rect x="2074" y="956.7" width="8" height="1.2" fill="#eef0f2"/><text x="2074.5" y="964.0" text-anchor="end" font-family="Liberation Sans" font-size="24.5" fill="#f4f6f8" stroke="#f4f6f8" stroke-width="0.8">7</text><rect x="2082" y="1001.8" width="31" height="81" fill="#a88258"/><rect x="2074" y="1041.8" width="8" height="1.2" fill="#eef0f2"/><text x="2074.5" y="1049.1" text-anchor="end" font-family="Liberation Sans" font-size="24.5" fill="#f4f6f8" stroke="#f4f6f8" stroke-width="0.8">8</text><rect x="2082" y="1086.9" width="31" height="81" fill="#ff7cbc"/><rect x="2074" y="1126.9" width="8" height="1.2" fill="#eef0f2"/><text x="2074.5" y="1134.2" text-anchor="end" font-family="Liberation Sans" font-size="24.5" fill="#f4f6f8" stroke="#f4f6f8" stroke-width="0.8">9</text><rect x="2082" y="1172.0" width="31" height="81" fill="#8a5cb2"/><rect x="2074" y="1212.0" width="8" height="1.2" fill="#eef0f2"/><text x="2074.5" y="1219.3" text-anchor="end" font-family="Liberation Sans" font-size="24.5" fill="#f4f6f8" stroke="#f4f6f8" stroke-width="0.8">10</text><rect x="2082" y="1257.1" width="31" height="81" fill="#ffbe80"/><rect x="2074" y="1297.1" width="8" height="1.2" fill="#eef0f2"/><text x="2074.5" y="1304.3999999999999" text-anchor="end" font-family="Liberation Sans" font-size="24.5" fill="#f4f6f8" stroke="#f4f6f8" stroke-width="0.8">11</text><text transform="translate(2144 968) rotate(-90)" font-family="Liberation Sans" font-size="33.5" fill="#f4f6f8" stroke="#f4f6f8" stroke-width="0.8" textLength="279" lengthAdjust="spacingAndGlyphs">ComponentColors</text></g></svg>
<div class="t" style="left:2217px;top:169.01px;font-size:11.8px;;letter-spacing:0.171px">MultiBlock Inspector</div>
<svg class="a" style="left:2463px;top:168px" width="13" height="13" viewBox="0 0 13 13"><rect x="1.5" y="1.5" width="10" height="10" fill="none" stroke="#8d8a84" stroke-width="1" stroke-dasharray="2 1"/><rect x="3.5" y="5.5" width="5" height="4" fill="none" stroke="#8d8a84"/></svg>
<svg class="a" style="left:2477px;top:168px" width="13" height="13" viewBox="0 0 13 13"><rect x="1.5" y="1.5" width="10" height="10" fill="none" stroke="#8d8a84" stroke-width="1" stroke-dasharray="2 1"/><path d="M3 3L10 10M10 3L3 10" stroke="#8d8a84" stroke-width="1.3"/></svg>
<div class="a" style="left:2222px;top:193px;width:259px;height:957px;background:#48525c;border:1px solid #30373f;border-left:2px solid #5f6872"></div>
<div class="a" style="left:2223px;top:194px;width:257px;height:19px;background:linear-gradient(#5b646e,#525b65);border-bottom:1px solid #3a424a"></div>
<div class="t" style="left:2226px;top:198.27px;font-size:11.5px;;letter-spacing:-0.514px">TCAE_08_15_25_chkpt_17</div>
<div class="a" style="left:2222px;top:1153px;width:259px;height:20px;background:linear-gradient(#3f4851,#323a43);border:1px solid #2a3038;box-shadow:inset 1px 1px 0 #5d6770"></div>
<div class="t" style="left:2317px;top:1158.69px;font-size:11px;color:#9aa1a8;letter-spacing:-0.178px">Extract Blocks</div>
<div class="a" style="left:2454px;top:1175px;width:27px;height:23px;background:linear-gradient(#3f4851,#323a43);border:1px solid #2a3038;border-top:2px solid #1e2226"></div>
<div class="t" style="left:2462px;top:1179.61px;font-size:17px;color:#b8d090">?</div>
<div class="t" style="left:2222px;top:1201.43px;font-size:11.3px;font-weight:bold;letter-spacing:0.009px">Color Legend:</div>
<svg class="a" style="left:2222px;top:1216px" width="16" height="16" viewBox="0 0 16 16"><circle cx="7.5" cy="7.5" r="6" fill="none" stroke="#222" stroke-width="1.2" stroke-dasharray="2.2 1.8"/></svg>
<div class="t" style="left:2241px;top:1219.69px;font-size:11px;;letter-spacing:-0.141px">- using coloring parameters from display</div>
<svg class="a" style="left:2222px;top:1233px" width="16" height="16" viewBox="0 0 16 16"><circle cx="7.5" cy="6" r="6" fill="#d8a020" stroke="#333" stroke-width="1"/><path d="M3 3l9 6M3 9l9-6M2 6h11M7.5 1v10" stroke="#8a6a20" stroke-width="0.7"/></svg>
<div class="t" style="left:2241px;top:1236.69px;font-size:11px;;letter-spacing:-0.074px">- color is inherited from a parent node or color</div>
<div class="t" style="left:2222px;top:1248.69px;font-size:11px;;letter-spacing:-0.533px">map</div>
<svg class="a" style="left:2222px;top:1263px" width="16" height="16" viewBox="0 0 16 16"><circle cx="7.5" cy="7" r="6.3" fill="#ffa500" stroke="#444" stroke-width="0.8"/></svg>
<div class="t" style="left:2241px;top:1266.69px;font-size:11px;;letter-spacing:-0.077px">- color explicitly specified for this node</div>
<div class="t" style="left:2222px;top:1291.43px;font-size:11.3px;font-weight:bold;letter-spacing:0.138px">Opacity Legend:</div>
<svg class="a" style="left:2222px;top:1306px" width="16" height="16" viewBox="0 0 16 16"><circle cx="8" cy="7" r="6" fill="none" stroke="#222" stroke-width="1.2" stroke-dasharray="2.2 1.8"/><rect x="6" y="6" width="4" height="2" fill="#222"/></svg>
<div class="t" style="left:2241px;top:1309.69px;font-size:11px;;letter-spacing:-0.102px">- using opacity parameters from display</div>
<svg class="a" style="left:2222px;top:1323px" width="16" height="16" viewBox="0 0 16 16"><path d="M8 8H14A6 6 0 1 0 8 14Z" fill="#454b52" stroke="#111" stroke-width="1.2" stroke-linejoin="round"/></svg>
<div class="t" style="left:2241px;top:1326.69px;font-size:11px;;letter-spacing:-0.045px">- opacity is inherited from a parent node</div>
<svg class="a" style="left:2222px;top:1340px" width="16" height="16" viewBox="0 0 16 16"><path d="M8 8H14A6 6 0 1 0 8 14Z" fill="#a8acb0" stroke="#1a1a1a" stroke-width="1.2" stroke-linejoin="round"/></svg>
<div class="t" style="left:2241px;top:1343.69px;font-size:11px;;letter-spacing:-0.051px">- opacity explicitly specified for this node</div>
<div class="a" style="left:0px;top:1389px;width:2492px;height:2px;background:#7a7a7a"></div>
<div class="a" style="left:822px;top:1369px;width:18px;height:17px;background:linear-gradient(#6a737c,#59626b);border:1px solid #3a4148;border-radius:2px"></div>
<svg class="a" style="left:822px;top:1369px" width="18" height="17" viewBox="0 0 18 17"><path d="M6 5L12 11M12 5L6 11" stroke="#dfe2e5" stroke-width="2.2"/></svg>
<div class="a" style="left:843px;top:1367px;width:799px;height:21px;background:#47505a;border-top:1px solid #2c3238;border-left:1px solid #2c3238;border-bottom:1px solid #58626b;border-right:1px solid #58626b"></div>
<div class="a" style="left:1646px;top:1367px;width:821px;height:21px;background:#323a44;border:1px solid #252b31;border-radius:3px"></div>
<div class="a" style="left:1648px;top:1369px;width:260px;height:17px;background:linear-gradient(#daf3d0,#bfe0b4)"></div>
<div class="t" style="left:1981px;top:1372.69px;font-size:11px;;letter-spacing:-0.124px">PC-1: 10.2 GiB/31.9 GiB 31.9%</div>
<svg class="a" style="left:0px;top:1388px" width="400" height="3" viewBox="0 0 400 3"><rect x="5" y="0" width="20" height="2" fill="#222"/><rect x="33" y="0" width="30" height="2" fill="#222"/><rect x="70" y="0" width="35" height="2" fill="#222"/><rect x="115" y="0" width="38" height="2" fill="#222"/><rect x="165" y="0" width="35" height="2" fill="#222"/><rect x="205" y="0" width="20" height="2" fill="#222"/><rect x="235" y="0" width="40" height="2" fill="#222"/><rect x="285" y="0" width="30" height="2" fill="#222"/><rect x="330" y="0" width="50" height="2" fill="#222"/></svg>
<svg class="a" style="left:4px;top:58px" width="5" height="18" viewBox="0 0 5 18"><rect x="0" y="0" width="2" height="2" fill="#9aa2aa"/><rect x="3" y="0" width="2" height="2" fill="#9aa2aa"/><rect x="0" y="3" width="2" height="2" fill="#9aa2aa"/><rect x="3" y="3" width="2" height="2" fill="#9aa2aa"/><rect x="0" y="6" width="2" height="2" fill="#9aa2aa"/><rect x="3" y="6" width="2" height="2" fill="#9aa2aa"/><rect x="0" y="9" width="2" height="2" fill="#9aa2aa"/><rect x="3" y="9" width="2" height="2" fill="#9aa2aa"/><rect x="0" y="12" width="2" height="2" fill="#9aa2aa"/><rect x="3" y="12" width="2" height="2" fill="#9aa2aa"/><rect x="0" y="15" width="2" height="2" fill="#9aa2aa"/><rect x="3" y="15" width="2" height="2" fill="#9aa2aa"/></svg>
<svg class="a" style="left:17px;top:57px" width="22" height="22" viewBox="0 0 22 22"><path d="M1 4h7l2 2h5v14H1z" fill="#e8b050"/><rect x="5" y="9" width="16" height="11" fill="#f2d462"/><path d="M15 9V4h-2.5l4-4 4 4H18v5z" fill="#2a8ee0"/></svg>
<svg class="a" style="left:49px;top:57px" width="22" height="22" viewBox="0 0 22 22"><path d="M1 4h7l2 2h5v14H1z" fill="#e8b050"/><rect x="5" y="9" width="16" height="11" fill="#f2d462"/><path d="M14 0h4v6h3l-5 6-5-6h3z" fill="#9ed07e"/></svg>
<svg class="a" style="left:81px;top:57px" width="22" height="22" viewBox="0 0 22 22"><path d="M9 0h5v8h4l-6.5 7L5 8h4z" fill="#9ed07e"/><rect x="0.5" y="14" width="21" height="8" rx="1.5" fill="#cfd1d2"/><rect x="3" y="17" width="2" height="2" fill="#555"/></svg>
<svg class="a" style="left:112px;top:56px" width="24" height="24" viewBox="0 0 24 24"><path d="M3 7V3h4M17 3h4v4M21 17v4h-4M7 21H3v-4" fill="none" stroke="#1e90e0" stroke-width="2"/><path d="M7 17l8-8h-4l2-2h6v6l-2 2v-4l-8 8z" fill="#f0b400"/></svg>
<svg class="a" style="left:144px;top:55px" width="24" height="25" viewBox="0 0 24 25"><path d="M1.5 13.5L19 4.5L22 1L21.5 6L14 23Z" fill="#fff" stroke="#fff" stroke-width="1.5" stroke-linejoin="round"/><path d="M3.5 13.3L7.5 11.2L6.8 16.5Z" fill="#d82020"/><path d="M9 10.5L12.5 8.7L9.5 18.8L7.8 17.6Z" fill="#1aa040"/><path d="M14 8L18.2 5.8L13.5 21.5L11.3 20Z" fill="#1050b0"/></svg>
<div class="a" style="left:175px;top:56px;width:1px;height:22px;background:#3d454d"></div>
<svg class="a" style="left:184px;top:57px" width="20" height="22" viewBox="0 0 20 22"><path d="M0 3L3 1V15L0 17Z" fill="#c4c4b6"/><path d="M3 1H9V15H3Z" fill="#f2eef2"/><path d="M0 3L3 1H9L6 3Z" fill="#dcdcd4"/><path d="M5 5h2M5 7h2" stroke="#999" stroke-width="0.6"/><path d="M10 3L13 1V15L10 17Z" fill="#c4c4b6"/><path d="M13 1H19V15H13Z" fill="#f2eef2"/><path d="M10 3L13 1H19L16 3Z" fill="#dcdcd4"/><path d="M15 5h2M15 7h2" stroke="#999" stroke-width="0.6"/><path d="M3 17v2h14v-2" fill="none" stroke="#9a9a9a" stroke-width="0.8"/><circle cx="10" cy="19.5" r="2.4" fill="#8fd070"/></svg>
<svg class="a" style="left:216px;top:57px" width="20" height="22" viewBox="0 0 20 22"><path d="M0 3L3 1V15L0 17Z" fill="#c4c4b6"/><path d="M3 1H9V15H3Z" fill="#f2eef2"/><path d="M0 3L3 1H9L6 3Z" fill="#dcdcd4"/><path d="M5 5h2M5 7h2" stroke="#999" stroke-width="0.6"/><path d="M10 3L13 1V15L10 17Z" fill="#c4c4b6"/><path d="M13 1H19V15H13Z" fill="#f2eef2"/><path d="M10 3L13 1H19L16 3Z" fill="#dcdcd4"/><path d="M15 5h2M15 7h2" stroke="#999" stroke-width="0.6"/><path d="M3 17v2h14v-2" fill="none" stroke="#9a9a9a" stroke-width="0.8"/><path d="M8 17.5l4 4M12 17.5l-4 4" stroke="#e03020" stroke-width="1.6"/></svg>
<svg class="a" style="left:247px;top:57px" width="22" height="22" viewBox="0 0 22 22"><path d="M4 6A8.5 8.5 0 1 0 11 2.5" fill="none" stroke="#98d080" stroke-width="2.2"/><path d="M1 3l6 0-1 6z" fill="#98d080"/><rect x="10" y="6" width="2" height="7" fill="#e0b020"/></svg>
<div class="a" style="left:277px;top:56px;width:1px;height:22px;background:#3d454d"></div>
<svg class="a" style="left:285px;top:57px" width="21" height="21" viewBox="0 0 21 21"><path d="M6 10C9 4 16 3 19 8C21 12 19 16 16 18" fill="none" stroke="#e82020" stroke-width="3.2"/><path d="M0 15L3 5L10 11Z" fill="#e82020"/></svg>
<svg class="a" style="left:318px;top:57px" width="21" height="21" viewBox="0 0 21 21"><path d="M15 10C12 4 5 3 2 8C0 12 2 16 5 18" fill="none" stroke="#d0d2d4" stroke-width="3.2"/><path d="M21 15L18 5L11 11Z" fill="#d0d2d4"/></svg>
<div class="a" style="left:345px;top:56px;width:1px;height:22px;background:#3d454d"></div>
<svg class="a" style="left:355px;top:56px" width="21" height="23" viewBox="0 0 21 23"><path d="M1 10L4 8H10V19L7 21H1Z" fill="#f0eef0"/><path d="M1 10L4 8H10L7 10Z" fill="#d8d8d0"/><path d="M7 10V21L10 19V8Z" fill="#c4c4b6"/><path d="M6 15L14 7L12 5H20V13L18 11L10 19Z" fill="#9ed07e" stroke="#6a9a50" stroke-width="0.6"/></svg>
<svg class="a" style="left:387px;top:57px" width="22" height="22" viewBox="0 0 22 22"><rect x="3" y="1" width="9" height="19" fill="#d9dadb"/><rect x="3" y="9" width="9" height="11" fill="#3aa0e0"/><rect x="3" y="15" width="9" height="5" fill="#6a50c0"/><path d="M1 7v14h14M14 14l6 6" fill="none" stroke="#8a939c" stroke-width="1" stroke-dasharray="2 2"/></svg>
<svg class="a" style="left:419px;top:56px" width="25" height="24" viewBox="0 0 25 24"><path d="M11 2C5 2 1 6 1 11s4 10 10 10c2 0 2-2 1-3s0-3 2-3h3c3 0 5-2 5-5C22 5 17 2 11 2z" fill="#f4dcb0"/><circle cx="5" cy="9" r="2" fill="#30a0e0"/><circle cx="10" cy="5" r="2" fill="#40b040"/><circle cx="5" cy="15" r="2" fill="#e02020"/><path d="M21 1l-9 17" stroke="#c8a050" stroke-width="2"/><path d="M22 0l-3 6-2-1z" fill="#fff"/><path d="M20 21h5l-2.5 3z" fill="#c8cdd2"/></svg>
<svg class="a" style="left:455px;top:58px" width="5" height="18" viewBox="0 0 5 18"><rect x="0" y="0" width="2" height="2" fill="#9aa2aa"/><rect x="3" y="0" width="2" height="2" fill="#9aa2aa"/><rect x="0" y="3" width="2" height="2" fill="#9aa2aa"/><rect x="3" y="3" width="2" height="2" fill="#9aa2aa"/><rect x="0" y="6" width="2" height="2" fill="#9aa2aa"/><rect x="3" y="6" width="2" height="2" fill="#9aa2aa"/><rect x="0" y="9" width="2" height="2" fill="#9aa2aa"/><rect x="3" y="9" width="2" height="2" fill="#9aa2aa"/><rect x="0" y="12" width="2" height="2" fill="#9aa2aa"/><rect x="3" y="12" width="2" height="2" fill="#9aa2aa"/><rect x="0" y="15" width="2" height="2" fill="#9aa2aa"/><rect x="3" y="15" width="2" height="2" fill="#9aa2aa"/></svg>
<svg class="a" style="left:469px;top:58px" width="20" height="18" viewBox="0 0 20 18"><rect x="0" y="0" width="4" height="18" fill="#a0d282"/><path d="M20 0v18L5 9z" fill="#a0d282"/></svg>
<svg class="a" style="left:501px;top:58px" width="21" height="18" viewBox="0 0 21 18"><path d="M14 0v18L0 9z" fill="#a0d282"/><rect x="16" y="0" width="5" height="18" fill="#a0d282"/></svg>
<svg class="a" style="left:535px;top:58px" width="13" height="18" viewBox="0 0 13 18"><path d="M13 0v18L0 9z" fill="#a0d282"/></svg>
<svg class="a" style="left:570px;top:58px" width="13" height="18" viewBox="0 0 13 18"><path d="M0 0v18L13 9z" fill="#a0d282"/></svg>
<svg class="a" style="left:597px;top:58px" width="21" height="18" viewBox="0 0 21 18"><rect x="0" y="0" width="5" height="18" fill="#a0d282"/><path d="M7 0v18L21 9z" fill="#a0d282"/></svg>
<svg class="a" style="left:629px;top:58px" width="20" height="18" viewBox="0 0 20 18"><path d="M0 0v18L15 9z" fill="#a0d282"/><rect x="16" y="0" width="4" height="18" fill="#a0d282"/></svg>
<svg class="a" style="left:662px;top:57px" width="18" height="20" viewBox="0 0 18 20"><path d="M2 10V4h11" fill="none" stroke="#a0d282" stroke-width="2.4"/><path d="M12 0l5 4-5 4z" fill="#a0d282"/><path d="M16 10v6H5" fill="none" stroke="#a0d282" stroke-width="2.4"/><path d="M6 12l-5 4 5 4z" fill="#a0d282"/></svg>
<svg class="a" style="left:696px;top:58px" width="5" height="18" viewBox="0 0 5 18"><rect x="0" y="0" width="2" height="2" fill="#9aa2aa"/><rect x="3" y="0" width="2" height="2" fill="#9aa2aa"/><rect x="0" y="3" width="2" height="2" fill="#9aa2aa"/><rect x="3" y="3" width="2" height="2" fill="#9aa2aa"/><rect x="0" y="6" width="2" height="2" fill="#9aa2aa"/><rect x="3" y="6" width="2" height="2" fill="#9aa2aa"/><rect x="0" y="9" width="2" height="2" fill="#9aa2aa"/><rect x="3" y="9" width="2" height="2" fill="#9aa2aa"/><rect x="0" y="12" width="2" height="2" fill="#9aa2aa"/><rect x="3" y="12" width="2" height="2" fill="#9aa2aa"/><rect x="0" y="15" width="2" height="2" fill="#9aa2aa"/><rect x="3" y="15" width="2" height="2" fill="#9aa2aa"/></svg>
<div class="t" style="left:704px;top:62.69px;font-size:11px;;letter-spacing:-0.359px">Time:</div>
<div class="a" style="left:733px;top:57px;width:74px;height:21px;background:#3b434b;border:1px solid #262b30;border-radius:3px"></div>
<div class="a" style="left:735px;top:59px;width:51px;height:17px;background:#59636d;border-radius:2px"></div>
<div class="a" style="left:787px;top:58px;width:19px;height:19px;background:linear-gradient(#59626b,#4b535c);border-radius:0 3px 3px 0"></div>
<svg class="a" style="left:791px;top:66px" width="10" height="6" viewBox="0 0 10 6"><path d="M0 0h10L5 5z" fill="#cfd3d7"/></svg>
<div class="t" style="left:739px;top:62.69px;font-size:11px;color:#dfe6ec">0</div>
<div class="a" style="left:810px;top:58px;width:47px;height:19px;background:#59636d;border:1px solid #3b434b;border-radius:3px"></div>
<div class="a" style="left:844px;top:59px;width:12px;height:17px;background:linear-gradient(#6a737c,#59626b)"></div>
<svg class="a" style="left:846px;top:61px" width="9" height="13" viewBox="0 0 9 13"><path d="M0 5h9L4.5 0z" fill="#9aa2aa"/><path d="M0 8h9L4.5 13z" fill="#7f878f"/></svg>
<div class="t" style="left:814px;top:62.69px;font-size:11px;color:#dfe6ec">0</div>
<svg class="a" style="left:867px;top:58px" width="5" height="18" viewBox="0 0 5 18"><rect x="0" y="0" width="2" height="2" fill="#9aa2aa"/><rect x="3" y="0" width="2" height="2" fill="#9aa2aa"/><rect x="0" y="3" width="2" height="2" fill="#9aa2aa"/><rect x="3" y="3" width="2" height="2" fill="#9aa2aa"/><rect x="0" y="6" width="2" height="2" fill="#9aa2aa"/><rect x="3" y="6" width="2" height="2" fill="#9aa2aa"/><rect x="0" y="9" width="2" height="2" fill="#9aa2aa"/><rect x="3" y="9" width="2" height="2" fill="#9aa2aa"/><rect x="0" y="12" width="2" height="2" fill="#9aa2aa"/><rect x="3" y="12" width="2" height="2" fill="#9aa2aa"/><rect x="0" y="15" width="2" height="2" fill="#9aa2aa"/><rect x="3" y="15" width="2" height="2" fill="#9aa2aa"/></svg>
<svg class="a" style="left:881px;top:57px" width="22" height="22" viewBox="0 0 22 22"><rect x="1" y="3" width="14" height="10" rx="2" fill="#cfd0d1"/><rect x="5" y="1" width="6" height="3" fill="#bbb"/><circle cx="8" cy="8" r="3.2" fill="#a8d8f0" stroke="#888" stroke-width="1"/><path d="M13 13l7 7" stroke="#2a8ee0" stroke-width="2.5"/><circle cx="13.5" cy="13.5" r="2.5" fill="none" stroke="#2a8ee0" stroke-width="1.6"/></svg>
<svg class="a" style="left:912px;top:57px" width="22" height="22" viewBox="0 0 22 22"><rect x="1" y="3" width="14" height="10" rx="2" fill="#cfd0d1"/><rect x="5" y="1" width="6" height="3" fill="#bbb"/><circle cx="8" cy="8" r="3.2" fill="#a8d8f0" stroke="#888" stroke-width="1"/><path d="M17 11v10M12 16h10" stroke="#2a8ee0" stroke-width="3"/></svg>
<svg class="a" style="left:4px;top:98px" width="5" height="18" viewBox="0 0 5 18"><rect x="0" y="0" width="2" height="2" fill="#9aa2aa"/><rect x="3" y="0" width="2" height="2" fill="#9aa2aa"/><rect x="0" y="3" width="2" height="2" fill="#9aa2aa"/><rect x="3" y="3" width="2" height="2" fill="#9aa2aa"/><rect x="0" y="6" width="2" height="2" fill="#9aa2aa"/><rect x="3" y="6" width="2" height="2" fill="#9aa2aa"/><rect x="0" y="9" width="2" height="2" fill="#9aa2aa"/><rect x="3" y="9" width="2" height="2" fill="#9aa2aa"/><rect x="0" y="12" width="2" height="2" fill="#9aa2aa"/><rect x="3" y="12" width="2" height="2" fill="#9aa2aa"/><rect x="0" y="15" width="2" height="2" fill="#9aa2aa"/><rect x="3" y="15" width="2" height="2" fill="#9aa2aa"/></svg>
<svg class="a" style="left:22px;top:95px" width="13" height="22" viewBox="0 0 13 22"><defs><linearGradient id="gg1" x1="0" y1="0" x2="0" y2="1"><stop offset="0" stop-color="#d8d8d8"/><stop offset="1" stop-color="#9a9a9a"/></linearGradient></defs><rect x="0" y="0" width="13" height="22" rx="1" fill="url(#gg1)"/></svg>
<svg class="a" style="left:50px;top:95px" width="20" height="21" viewBox="0 0 20 21"><circle cx="6.5" cy="6.5" r="6" fill="#cfcfcf"/><rect x="1" y="9" width="19" height="12" fill="#b8b8b8"/><path d="M10 15h10M14 9v12" stroke="#d8d8d8" stroke-width="0.8"/></svg>
<svg class="a" style="left:81px;top:95px" width="21" height="21" viewBox="0 0 21 21"><rect x="1" y="9" width="19" height="12" fill="#b8b8b8"/><path d="M5 13a5 5 0 1 1 7-6" fill="none" stroke="#8a8a8a" stroke-width="2"/><path d="M14 4a4 4 0 1 1 -2 8" fill="none" stroke="#8a8a8a" stroke-width="2"/><path d="M10 15h10M14 9v12" stroke="#d0d0d0" stroke-width="0.8"/></svg>
<svg class="a" style="left:113px;top:96px" width="23" height="20" viewBox="0 0 23 20"><path d="M0 4.5L6 0v3h11V0l6 4.5L17 9V6H6v3z" fill="#d0d2d4"/><path d="M1 16h21M1 11v9M7 13v5M13 13v5M22 11v9" stroke="#c0c4c8" stroke-width="1"/></svg>
<svg class="a" style="left:145px;top:96px" width="23" height="20" viewBox="0 0 23 20"><path d="M0 4.5L6 0v3h11V0l6 4.5L17 9V6H6v3z" fill="#d0d2d4"/><path d="M1 16h21M1 11v9M7 13v5M13 13v5M22 11v9" stroke="#c0c4c8" stroke-width="1"/><text x="15" y="20" font-size="9" font-family="Liberation Sans" fill="#8a8a8a">ci</text></svg>
<svg class="a" style="left:177px;top:96px" width="23" height="20" viewBox="0 0 23 20"><path d="M0 4.5L6 0v3h11V0l6 4.5L17 9V6H6v3z" fill="#d0d2d4"/><path d="M1 16h21M1 11v9M7 13v5M13 13v5M22 11v9" stroke="#c0c4c8" stroke-width="1"/><text x="17" y="20" font-size="10" font-family="Liberation Sans" fill="#8a8a8a">t</text></svg>
<svg class="a" style="left:209px;top:96px" width="23" height="20" viewBox="0 0 23 20"><path d="M0 4.5L6 0v3h11V0l6 4.5L17 9V6H6v3z" fill="#d0d2d4"/><path d="M1 16h21M1 11v9M7 13v5M13 13v5M22 11v9" stroke="#c0c4c8" stroke-width="1"/><ellipse cx="17" cy="16" rx="3.5" ry="2.5" fill="#ddd"/><circle cx="17" cy="16" r="1.2" fill="#555"/></svg>
<div class="a" style="left:237px;top:96px;width:70px;height:21px;background:linear-gradient(#636c76,#545d66);border:1px solid #3a4148;border-radius:3px"></div>
<svg class="a" style="left:293px;top:103px" width="9" height="5" viewBox="0 0 9 5"><path d="M0 0h9L4.5 5z" fill="#8a939c"/></svg>
<div class="a" style="left:313px;top:96px;width:70px;height:21px;background:linear-gradient(#636c76,#545d66);border:1px solid #3a4148;border-radius:3px"></div>
<svg class="a" style="left:369px;top:103px" width="9" height="5" viewBox="0 0 9 5"><path d="M0 0h9L4.5 5z" fill="#8a939c"/></svg>
<svg class="a" style="left:393px;top:98px" width="5" height="18" viewBox="0 0 5 18"><rect x="0" y="0" width="2" height="2" fill="#9aa2aa"/><rect x="3" y="0" width="2" height="2" fill="#9aa2aa"/><rect x="0" y="3" width="2" height="2" fill="#9aa2aa"/><rect x="3" y="3" width="2" height="2" fill="#9aa2aa"/><rect x="0" y="6" width="2" height="2" fill="#9aa2aa"/><rect x="3" y="6" width="2" height="2" fill="#9aa2aa"/><rect x="0" y="9" width="2" height="2" fill="#9aa2aa"/><rect x="3" y="9" width="2" height="2" fill="#9aa2aa"/><rect x="0" y="12" width="2" height="2" fill="#9aa2aa"/><rect x="3" y="12" width="2" height="2" fill="#9aa2aa"/><rect x="0" y="15" width="2" height="2" fill="#9aa2aa"/><rect x="3" y="15" width="2" height="2" fill="#9aa2aa"/></svg>
<div class="a" style="left:402px;top:96px;width:101px;height:21px;background:linear-gradient(#636c76,#545d66);border:1px solid #3a4148;border-radius:3px"></div>
<div class="t" style="left:405.7px;top:101.69px;font-size:11px;color:#8e969e;letter-spacing:-0.065px">Representation</div>
<svg class="a" style="left:488px;top:103px" width="9" height="5" viewBox="0 0 9 5"><path d="M0 0h9L4.5 5z" fill="#8a939c"/></svg>
<svg class="a" style="left:513px;top:98px" width="5" height="18" viewBox="0 0 5 18"><rect x="0" y="0" width="2" height="2" fill="#9aa2aa"/><rect x="3" y="0" width="2" height="2" fill="#9aa2aa"/><rect x="0" y="3" width="2" height="2" fill="#9aa2aa"/><rect x="3" y="3" width="2" height="2" fill="#9aa2aa"/><rect x="0" y="6" width="2" height="2" fill="#9aa2aa"/><rect x="3" y="6" width="2" height="2" fill="#9aa2aa"/><rect x="0" y="9" width="2" height="2" fill="#9aa2aa"/><rect x="3" y="9" width="2" height="2" fill="#9aa2aa"/><rect x="0" y="12" width="2" height="2" fill="#9aa2aa"/><rect x="3" y="12" width="2" height="2" fill="#9aa2aa"/><rect x="0" y="15" width="2" height="2" fill="#9aa2aa"/><rect x="3" y="15" width="2" height="2" fill="#9aa2aa"/></svg>
<svg class="a" style="left:527px;top:95px" width="21" height="22" viewBox="0 0 21 22"><path d="M4 4L17 18M17 4L4 18" stroke="#9a9060" stroke-width="1.2"/><path d="M1 1l7 2-5 5z" fill="#a0d282"/><path d="M20 1l-7 2 5 5z" fill="#a0d282"/><path d="M1 21l7-2-5-5z" fill="#a0d282"/><path d="M20 21l-7-2 5-5z" fill="#a0d282"/></svg>
<svg class="a" style="left:558px;top:95px" width="22" height="22" viewBox="0 0 22 22"><circle cx="11" cy="11" r="3" fill="#bbb"/><path d="M1 1l7 3-4 4z" fill="#d8d8d8"/><path d="M21 1l-7 3 4 4z" fill="#d8d8d8"/><path d="M1 21l7-3-4-4z" fill="#d8d8d8"/><path d="M21 21l-7-3 4-4z" fill="#d8d8d8"/></svg>
<svg class="a" style="left:590px;top:95px" width="22" height="22" viewBox="0 0 22 22"><circle cx="11" cy="11" r="10.5" fill="#2a9de0"/><path d="M5 5L17 17M17 5L5 17" stroke="#9a9060" stroke-width="1"/><path d="M4 4l5 1-4 4z" fill="#a0d282"/><path d="M18 4l-5 1 4 4z" fill="#a0d282"/><path d="M4 18l5-1-4-4z" fill="#a0d282"/><path d="M18 18l-5-1 4-4z" fill="#a0d282"/></svg>
<svg class="a" style="left:622px;top:95px" width="22" height="22" viewBox="0 0 22 22"><rect x="2" y="2" width="18" height="18" rx="5" fill="#b4b4b4"/><path d="M0 0l6 2-4 4zM22 0l-6 2 4 4zM0 22l6-2-4-4zM22 22l-6-2 4-4z" fill="#e0e0e0"/></svg>
<svg class="a" style="left:654px;top:95px" width="22" height="22" viewBox="0 0 22 22"><path d="M1 6V1h5M16 1h5M1 16v5" fill="none" stroke="#8a939c" stroke-width="1" stroke-dasharray="2 1.5"/><circle cx="11" cy="11" r="5.5" fill="#b8dcf4" stroke="#d8d8d8" stroke-width="1.6"/><path d="M15 15l6 6" stroke="#d8d8d8" stroke-width="2.5"/></svg>
<svg class="a" style="left:686px;top:95px" width="22" height="22" viewBox="0 0 22 22"><text x="0" y="8" font-size="8.5" font-family="Liberation Sans" fill="#9aa0a6">+X</text><path d="M17 0l-3.5 5h2.2v10h2.6V5h2.2z" fill="#a0d282"/><rect x="13.5" y="14" width="7" height="7" fill="#e03a20"/><path d="M13.5 16.5H5v-2.5L0 17.5l5 3.5v-2.5h8.5z" fill="#f0c000"/></svg>
<svg class="a" style="left:719px;top:95px" width="22" height="22" viewBox="0 0 22 22"><text x="11" y="8" font-size="8.5" font-family="Liberation Sans" fill="#9aa0a6">-X</text><path d="M4 0l-3.5 5h2.2v10h2.6V5h2.2z" fill="#a0d282"/><rect x="0.5" y="14" width="7" height="7" fill="#e03a20"/><path d="M7.5 16.5H16v-2.5l5 3.5-5 3.5v-2.5H7.5z" fill="#f0c000"/></svg>
<svg class="a" style="left:751px;top:95px" width="22" height="22" viewBox="0 0 22 22"><text x="11" y="8" font-size="8.5" font-family="Liberation Sans" fill="#9aa0a6">+Y</text><path d="M4 0l-3.5 5h2.2v10h2.6V5h2.2z" fill="#a0d282"/><rect x="0.5" y="14" width="7" height="7" fill="#f0c000"/><path d="M7.5 16.5H16v-2.5l5 3.5-5 3.5v-2.5H7.5z" fill="#e03a20"/></svg>
<svg class="a" style="left:782px;top:95px" width="22" height="22" viewBox="0 0 22 22"><text x="0" y="8" font-size="8.5" font-family="Liberation Sans" fill="#9aa0a6">-Y</text><path d="M17 0l-3.5 5h2.2v10h2.6V5h2.2z" fill="#a0d282"/><rect x="13.5" y="14" width="7" height="7" fill="#f0c000"/><path d="M13.5 16.5H5v-2.5L0 17.5l5 3.5v-2.5h8.5z" fill="#e03a20"/></svg>
<svg class="a" style="left:814px;top:95px" width="22" height="22" viewBox="0 0 22 22"><text x="0" y="8" font-size="8.5" font-family="Liberation Sans" fill="#9aa0a6">+Z</text><path d="M17 0l-3.5 5h2.2v10h2.6V5h2.2z" fill="#f0c000"/><rect x="13.5" y="14" width="7" height="7" fill="#a0d282"/><path d="M13.5 16.5H5v-2.5L0 17.5l5 3.5v-2.5h8.5z" fill="#e03a20"/></svg>
<svg class="a" style="left:847px;top:95px" width="22" height="22" viewBox="0 0 22 22"><text x="11" y="8" font-size="8.5" font-family="Liberation Sans" fill="#9aa0a6">-Z</text><path d="M4 0l-3.5 5h2.2v10h2.6V5h2.2z" fill="#f0c000"/><rect x="0.5" y="14" width="7" height="7" fill="#a0d282"/><path d="M7.5 16.5H16v-2.5l5 3.5-5 3.5v-2.5H7.5z" fill="#e03a20"/></svg>
<svg class="a" style="left:878px;top:95px" width="23" height="22" viewBox="0 0 23 22"><path d="M11.5 0l-3 4h2v6h2V4h2z" fill="#f0c000"/><path d="M10 12L3 19" stroke="#a0d282" stroke-width="2.2"/><path d="M0 21l6-1-4-4z" fill="#a0d282"/><path d="M13 12l6 6" stroke="#e03a20" stroke-width="2.2"/><path d="M23 21l-6-1 4-4z" fill="#e03a20"/><path d="M11.5 9l3 2.5-3 2.5-3-2.5z" fill="#f0c000"/></svg>
<svg class="a" style="left:910px;top:95px" width="22" height="22" viewBox="0 0 22 22"><path d="M6.90 14.87A6.9 6.9 0 1 1 14.33 7.04" fill="none" stroke="#a0d282" stroke-width="1.9"/><path d="M11 6L18 6L14.5 11Z" fill="#a0d282"/><text x="7" y="21.4" font-size="9" font-family="Liberation Sans" fill="#8a8e92">+90</text></svg>
<svg class="a" style="left:942px;top:95px" width="22" height="22" viewBox="0 0 22 22"><path d="M6.67 7.04A6.9 6.9 0 1 1 14.10 14.87" fill="none" stroke="#a0d282" stroke-width="1.9"/><path d="M3 6L10 6L6.5 11Z" fill="#a0d282"/><text x="0.5" y="21.4" font-size="9" font-family="Liberation Sans" fill="#8a8e92">-90</text></svg>
<svg class="a" style="left:978px;top:98px" width="5" height="18" viewBox="0 0 5 18"><rect x="0" y="0" width="2" height="2" fill="#9aa2aa"/><rect x="3" y="0" width="2" height="2" fill="#9aa2aa"/><rect x="0" y="3" width="2" height="2" fill="#9aa2aa"/><rect x="3" y="3" width="2" height="2" fill="#9aa2aa"/><rect x="0" y="6" width="2" height="2" fill="#9aa2aa"/><rect x="3" y="6" width="2" height="2" fill="#9aa2aa"/><rect x="0" y="9" width="2" height="2" fill="#9aa2aa"/><rect x="3" y="9" width="2" height="2" fill="#9aa2aa"/><rect x="0" y="12" width="2" height="2" fill="#9aa2aa"/><rect x="3" y="12" width="2" height="2" fill="#9aa2aa"/><rect x="0" y="15" width="2" height="2" fill="#9aa2aa"/><rect x="3" y="15" width="2" height="2" fill="#9aa2aa"/></svg>
<div class="a" style="left:987px;top:91px;width:31px;height:31px;background:#3e464e;border:1px solid #2b3137;border-radius:3px;box-shadow:inset 0 0 0 1px #5a636c"></div>
<svg class="a" style="left:992px;top:96px" width="21" height="21" viewBox="0 0 21 21"><path d="M5 3v10" stroke="#f0c000" stroke-width="1.6"/><path d="M5 0l-2 3h4z" fill="#f0c000"/><path d="M5 13l-4 4" stroke="#a0d282" stroke-width="1.6"/><path d="M5 13h9" stroke="#e03a20" stroke-width="1.6"/><path d="M16 13l-3-2v4z" fill="#e03a20"/><ellipse cx="14" cy="4" rx="4.5" ry="2.8" fill="#eee"/><circle cx="14" cy="4" r="1.8" fill="#333"/></svg>
<svg class="a" style="left:1024px;top:95px" width="21" height="21" viewBox="0 0 21 21"><path d="M17 15A8.5 8.5 0 1 1 15 4" fill="none" stroke="#a0d282" stroke-width="2.2"/><path d="M12 1l6 1-2 6z" fill="#a0d282"/><circle cx="10.5" cy="11" r="2.5" fill="#f0c000"/></svg>
<svg class="a" style="left:1055px;top:95px" width="21" height="21" viewBox="0 0 21 21"><path d="M17 15A8.5 8.5 0 1 1 15 4" fill="none" stroke="#d0d0d0" stroke-width="2.2"/><path d="M12 1l6 1-2 6z" fill="#d0d0d0"/><circle cx="10.5" cy="11" r="3" fill="#d0d0d0"/><path d="M10.5 5v12M4.5 11h12" stroke="#d0d0d0" stroke-width="0.8"/></svg>
<svg class="a" style="left:1088px;top:95px" width="21" height="22" viewBox="0 0 21 22"><path d="M17 15A8.5 8.5 0 1 1 15 4" fill="none" stroke="#a0d282" stroke-width="2.2"/><path d="M12 1l6 1-2 6z" fill="#a0d282"/><path d="M13 13l7 7-2 1-2-3-2 2z" fill="#222"/></svg>
<svg class="a" style="left:1122px;top:98px" width="5" height="18" viewBox="0 0 5 18"><rect x="0" y="0" width="2" height="2" fill="#9aa2aa"/><rect x="3" y="0" width="2" height="2" fill="#9aa2aa"/><rect x="0" y="3" width="2" height="2" fill="#9aa2aa"/><rect x="3" y="3" width="2" height="2" fill="#9aa2aa"/><rect x="0" y="6" width="2" height="2" fill="#9aa2aa"/><rect x="3" y="6" width="2" height="2" fill="#9aa2aa"/><rect x="0" y="9" width="2" height="2" fill="#9aa2aa"/><rect x="3" y="9" width="2" height="2" fill="#9aa2aa"/><rect x="0" y="12" width="2" height="2" fill="#9aa2aa"/><rect x="3" y="12" width="2" height="2" fill="#9aa2aa"/><rect x="0" y="15" width="2" height="2" fill="#9aa2aa"/><rect x="3" y="15" width="2" height="2" fill="#9aa2aa"/></svg>
<div class="a" style="left:1132px;top:91px;width:31px;height:31px;background:#3e464e;border:1px solid #2b3137;border-radius:3px;box-shadow:inset 0 0 0 1px #5a636c"></div>
<svg class="a" style="left:1136px;top:95px" width="22" height="22" viewBox="0 0 22 22"><circle cx="11" cy="10" r="5.5" fill="#f2c200"/><rect x="8.5" y="14" width="5" height="4" fill="#f2c200"/><rect x="9" y="19" width="4" height="1" fill="#888"/><path d="M11 0v2M3 3l1.5 1.5M19 3l-1.5 1.5M0 10h2M20 10h2M3 17l1.5-1.5M19 17l-1.5-1.5" stroke="#8a8a80" stroke-width="1"/></svg>
<svg class="a" style="left:1172px;top:98px" width="5" height="18" viewBox="0 0 5 18"><rect x="0" y="0" width="2" height="2" fill="#9aa2aa"/><rect x="3" y="0" width="2" height="2" fill="#9aa2aa"/><rect x="0" y="3" width="2" height="2" fill="#9aa2aa"/><rect x="3" y="3" width="2" height="2" fill="#9aa2aa"/><rect x="0" y="6" width="2" height="2" fill="#9aa2aa"/><rect x="3" y="6" width="2" height="2" fill="#9aa2aa"/><rect x="0" y="9" width="2" height="2" fill="#9aa2aa"/><rect x="3" y="9" width="2" height="2" fill="#9aa2aa"/><rect x="0" y="12" width="2" height="2" fill="#9aa2aa"/><rect x="3" y="12" width="2" height="2" fill="#9aa2aa"/><rect x="0" y="15" width="2" height="2" fill="#9aa2aa"/><rect x="3" y="15" width="2" height="2" fill="#9aa2aa"/></svg>
<svg class="a" style="left:1189px;top:98px" width="5" height="18" viewBox="0 0 5 18"><rect x="0" y="0" width="2" height="2" fill="#9aa2aa"/><rect x="3" y="0" width="2" height="2" fill="#9aa2aa"/><rect x="0" y="3" width="2" height="2" fill="#9aa2aa"/><rect x="3" y="3" width="2" height="2" fill="#9aa2aa"/><rect x="0" y="6" width="2" height="2" fill="#9aa2aa"/><rect x="3" y="6" width="2" height="2" fill="#9aa2aa"/><rect x="0" y="9" width="2" height="2" fill="#9aa2aa"/><rect x="3" y="9" width="2" height="2" fill="#9aa2aa"/><rect x="0" y="12" width="2" height="2" fill="#9aa2aa"/><rect x="3" y="12" width="2" height="2" fill="#9aa2aa"/><rect x="0" y="15" width="2" height="2" fill="#9aa2aa"/><rect x="3" y="15" width="2" height="2" fill="#9aa2aa"/></svg>
<svg class="a" style="left:1200px;top:95px" width="25" height="22" viewBox="0 0 25 22"><path d="M1 4Q12 0 24 4L22 18Q12 24 3 18Z" fill="#c8c8c8"/><ellipse cx="12.5" cy="4" rx="11.5" ry="3.5" fill="#e8e8e8"/><path d="M14 10Q20 8 22 14" fill="none" stroke="#999" stroke-width="1.5"/></svg>
<svg class="a" style="left:1234px;top:95px" width="25" height="22" viewBox="0 0 25 22"><path d="M0 4L25 0V17L0 22Z" fill="#8a8a8a"/><path d="M6 3v17M12 2v16M18 1v16" stroke="#b0b0b0" stroke-width="1.5"/></svg>
<svg class="a" style="left:1270px;top:98px" width="5" height="18" viewBox="0 0 5 18"><rect x="0" y="0" width="2" height="2" fill="#9aa2aa"/><rect x="3" y="0" width="2" height="2" fill="#9aa2aa"/><rect x="0" y="3" width="2" height="2" fill="#9aa2aa"/><rect x="3" y="3" width="2" height="2" fill="#9aa2aa"/><rect x="0" y="6" width="2" height="2" fill="#9aa2aa"/><rect x="3" y="6" width="2" height="2" fill="#9aa2aa"/><rect x="0" y="9" width="2" height="2" fill="#9aa2aa"/><rect x="3" y="9" width="2" height="2" fill="#9aa2aa"/><rect x="0" y="12" width="2" height="2" fill="#9aa2aa"/><rect x="3" y="12" width="2" height="2" fill="#9aa2aa"/><rect x="0" y="15" width="2" height="2" fill="#9aa2aa"/><rect x="3" y="15" width="2" height="2" fill="#9aa2aa"/></svg>
<svg class="a" style="left:1285px;top:93px" width="21" height="24" viewBox="0 0 21 24"><ellipse cx="9" cy="7" rx="8" ry="3" fill="#fff"/><rect x="1" y="7" width="16" height="14" fill="#fff"/><ellipse cx="9" cy="21" rx="8" ry="3" fill="#fff"/><path d="M3 11a6 4 0 0 1 12 0M4 14a5 3 0 0 1 10 0" fill="none" stroke="#e03020" stroke-width="1"/><path d="M3 17a6 3 0 0 0 12 0" fill="none" stroke="#3080e0" stroke-width="1"/><path d="M13 12a3 3 0 0 1 3 3" stroke="#30b040" fill="none"/><path d="M16 0v7M12.5 3.5h7" stroke="#00c000" stroke-width="2.4"/></svg>
<svg class="a" style="left:1318px;top:93px" width="22" height="24" viewBox="0 0 22 24"><path d="M1 4h10l4 4v15H1z" fill="#fff"/><circle cx="8" cy="15" r="5.5" fill="none" stroke="#e03020" stroke-width="1"/><circle cx="8" cy="15" r="3.5" fill="none" stroke="#30b040" stroke-width="1"/><path d="M3 17a5 5 0 0 0 9 1" fill="none" stroke="#3080e0" stroke-width="1"/><path d="M17 0v8M13 4h8" stroke="#00c000" stroke-width="2.4"/></svg>
<svg class="a" style="left:1352px;top:95px" width="18" height="22" viewBox="0 0 18 22"><path d="M4 0h9l4 4v14H4z" fill="#f0f0f0" stroke="#bbb" stroke-width="0.5"/><path d="M1 3h9l4 4v15H1z" fill="#fff" stroke="#bbb" stroke-width="0.5"/><circle cx="7.5" cy="14" r="5" fill="none" stroke="#e03020" stroke-width="1"/><circle cx="7.5" cy="14" r="3" fill="none" stroke="#30b040" stroke-width="1"/><path d="M3 16a5 5 0 0 0 9 1" fill="none" stroke="#3080e0" stroke-width="1"/></svg>
<svg class="a" style="left:4px;top:137px" width="5" height="18" viewBox="0 0 5 18"><rect x="0" y="0" width="2" height="2" fill="#9aa2aa"/><rect x="3" y="0" width="2" height="2" fill="#9aa2aa"/><rect x="0" y="3" width="2" height="2" fill="#9aa2aa"/><rect x="3" y="3" width="2" height="2" fill="#9aa2aa"/><rect x="0" y="6" width="2" height="2" fill="#9aa2aa"/><rect x="3" y="6" width="2" height="2" fill="#9aa2aa"/><rect x="0" y="9" width="2" height="2" fill="#9aa2aa"/><rect x="3" y="9" width="2" height="2" fill="#9aa2aa"/><rect x="0" y="12" width="2" height="2" fill="#9aa2aa"/><rect x="3" y="12" width="2" height="2" fill="#9aa2aa"/><rect x="0" y="15" width="2" height="2" fill="#9aa2aa"/><rect x="3" y="15" width="2" height="2" fill="#9aa2aa"/></svg>
<svg class="a" style="left:19px;top:134px" width="18" height="22" viewBox="0 0 18 22"><rect x="0.5" y="0.5" width="17" height="21" rx="2" fill="#d6d6d0" stroke="#999" stroke-width="0.8"/><rect x="3" y="3" width="12" height="4" rx="1" fill="#c4e0f4"/><circle cx="4.5" cy="10.5" r="1.4" fill="#6a6a50"/><circle cx="4.5" cy="14.5" r="1.4" fill="#6a6a50"/><circle cx="4.5" cy="18.5" r="1.4" fill="#6a6a50"/><circle cx="9.0" cy="10.5" r="1.4" fill="#6a6a50"/><circle cx="9.0" cy="14.5" r="1.4" fill="#6a6a50"/><circle cx="9.0" cy="18.5" r="1.4" fill="#6a6a50"/><circle cx="13.5" cy="10.5" r="1.4" fill="#6a6a50"/><circle cx="13.5" cy="14.5" r="1.4" fill="#6a6a50"/><circle cx="13.5" cy="18.5" r="1.4" fill="#6a6a50"/></svg>
<svg class="a" style="left:50px;top:134px" width="22" height="22" viewBox="0 0 22 22"><ellipse cx="11" cy="11" rx="10" ry="8" transform="rotate(35 11 11)" fill="#c0c0c0"/><ellipse cx="10" cy="10" rx="8" ry="6" transform="rotate(35 10 10)" fill="#a8a8a8"/><ellipse cx="9" cy="9" rx="4" ry="3" transform="rotate(35 9 9)" fill="none" stroke="#ccc"/></svg>
<svg class="a" style="left:83px;top:134px" width="22" height="23" viewBox="0 0 22 23"><path d="M3 5L9 1H21V17L15 22H3Z M3 5H15V22 M15 5L21 1" fill="none" stroke="#bdbdbd" stroke-width="0.9"/><path d="M1 6L9 2V17L1 21z" fill="#c8c8c8"/><path d="M6 6h9v12H9z" fill="#b0b0b0"/></svg>
<svg class="a" style="left:116px;top:134px" width="22" height="23" viewBox="0 0 22 23"><path d="M3 5L9 1H21V17L15 22H3Z M3 5H15V22 M15 5L21 1" fill="none" stroke="#bdbdbd" stroke-width="0.9"/><path d="M5 6L13 4L14 17L6 20z" fill="#cacaca"/></svg>
<svg class="a" style="left:149px;top:134px" width="22" height="23" viewBox="0 0 22 23"><path d="M3 5L9 1H21V17L15 22H3Z M3 5H15V22 M15 5L21 1" fill="none" stroke="#bdbdbd" stroke-width="0.9"/><rect x="4" y="6" width="6" height="8" fill="#c8c8c8"/><rect x="12" y="9" width="4" height="11" fill="#c0c0c0"/></svg>
<svg class="a" style="left:182px;top:134px" width="22" height="23" viewBox="0 0 22 23"><path d="M1 4L11 0L21 4V19L11 23L1 19Z" fill="#e0e0e0"/><path d="M1 4L11 8L21 4M11 8V23" stroke="#bbb" fill="none"/><rect x="8" y="5" width="8" height="8" fill="#a8a8a8"/></svg>
<svg class="a" style="left:214px;top:133px" width="23" height="24" viewBox="0 0 23 24"><circle cx="11.5" cy="12" r="9" fill="#c8c8c8"/><circle cx="11.5" cy="2.5" r="2.3" fill="#e0e0e0"/><circle cx="11.5" cy="21.5" r="2.3" fill="#e0e0e0"/><circle cx="2" cy="12" r="2.3" fill="#e0e0e0"/><circle cx="21" cy="12" r="2.3" fill="#e0e0e0"/><path d="M5 8h13M4 12h15M5 16h13M9 4v16M14 4v16" stroke="#eee" stroke-width="0.7"/></svg>
<svg class="a" style="left:249px;top:134px" width="20" height="22" viewBox="0 0 20 22"><circle cx="7" cy="11" r="4.5" fill="#d0d0d0"/><path d="M1 3q5 -2 9 1t9 0M12 8h7M12 14h7M1 19q5 2 9 -1t9 0" fill="none" stroke="#c0c0c0" stroke-width="1"/></svg>
<svg class="a" style="left:280px;top:136px" width="22" height="18" viewBox="0 0 22 18"><path d="M0 18V12Q10 10 14 3L22 8V18Z" fill="#d0d0d0"/><path d="M14 3Q18 10 22 12" fill="none" stroke="#aaa"/></svg>
<svg class="a" style="left:315px;top:134px" width="20" height="22" viewBox="0 0 20 22"><circle cx="10" cy="11" r="9" fill="none" stroke="#a8b0b0" stroke-width="1"/><circle cx="7" cy="8" r="2.2" fill="#c8e8d8"/><circle cx="13" cy="13" r="3.8" fill="#9ed07e"/><circle cx="5" cy="15" r="1.5" fill="#9ed07e"/></svg>
<svg class="a" style="left:346px;top:133px" width="22" height="23" viewBox="0 0 22 23"><circle cx="12" cy="13" r="9" fill="none" stroke="#d0d0d0" stroke-width="1.2"/><circle cx="3" cy="3" r="2.6" fill="#e8e8e8"/><circle cx="15" cy="14" r="3.5" fill="#d0d0d0"/><circle cx="7" cy="17" r="1.8" fill="#d0d0d0"/></svg>
<svg class="a" style="left:382px;top:137px" width="5" height="18" viewBox="0 0 5 18"><rect x="0" y="0" width="2" height="2" fill="#9aa2aa"/><rect x="3" y="0" width="2" height="2" fill="#9aa2aa"/><rect x="0" y="3" width="2" height="2" fill="#9aa2aa"/><rect x="3" y="3" width="2" height="2" fill="#9aa2aa"/><rect x="0" y="6" width="2" height="2" fill="#9aa2aa"/><rect x="3" y="6" width="2" height="2" fill="#9aa2aa"/><rect x="0" y="9" width="2" height="2" fill="#9aa2aa"/><rect x="3" y="9" width="2" height="2" fill="#9aa2aa"/><rect x="0" y="12" width="2" height="2" fill="#9aa2aa"/><rect x="3" y="12" width="2" height="2" fill="#9aa2aa"/><rect x="0" y="15" width="2" height="2" fill="#9aa2aa"/><rect x="3" y="15" width="2" height="2" fill="#9aa2aa"/></svg>
<svg class="a" style="left:398px;top:134px" width="17" height="22" viewBox="0 0 17 22"><path d="M0.5 0v21.5H16" fill="none" stroke="#9a9060" stroke-width="1"/><path d="M8 2v18M5 6h6M5 15h6" stroke="#3090e0" stroke-width="1.2"/><rect x="5" y="8" width="6" height="6" fill="none" stroke="#3090e0" stroke-width="1.4"/></svg>
<svg class="a" style="left:430px;top:135px" width="19" height="20" viewBox="0 0 19 20"><rect x="0" y="0" width="15" height="14" fill="#d8ecfa"/><rect x="8" y="7" width="7" height="7" fill="#47505a"/><rect x="10" y="11" width="8" height="8" fill="#9ed07e"/></svg>
<svg class="a" style="left:461px;top:133px" width="25" height="24" viewBox="0 0 25 24"><path d="M0.5 0v23.5H25" fill="none" stroke="#d0d0d0"/><path d="M4 23V15h4V8h4V2h3v6h3v7h3v4h3v4z" fill="#c0c0c0"/><path d="M12 2h3v21h-3z" fill="#d8d8d8"/></svg>
<svg class="a" style="left:495px;top:134px" width="22" height="22" viewBox="0 0 22 22"><circle cx="5" cy="5" r="4.2" fill="none" stroke="#d0d0d0" stroke-width="1"/><path d="M5 2v3h2" stroke="#d0d0d0" fill="none"/><circle cx="16" cy="5" r="4.5" fill="#c8c8c8"/><path d="M1 13v8h20M2 19l2-4 2 4 2-4 2 4 2-4 2 4 2-4 2 4" fill="none" stroke="#d0d0d0" stroke-width="0.9"/></svg>
<svg class="a" style="left:528px;top:134px" width="21" height="22" viewBox="0 0 21 22"><path d="M1 3L20 1V17L6 22Z" fill="#c0c0c0"/><path d="M2 20L19 3" stroke="#eee" stroke-width="1"/><path d="M4 13l2 2 2-4 2 3 2-4 2 3" fill="none" stroke="#888" stroke-width="0.8"/></svg>
<svg class="a" style="left:562px;top:134px" width="20" height="22" viewBox="0 0 20 22"><circle cx="5" cy="5" r="4.2" fill="none" stroke="#3090e0" stroke-width="1"/><path d="M5 2v3h2" stroke="#3090e0" fill="none"/><path d="M12 1h7v7h-7z" fill="none" stroke="#8a939c" stroke-dasharray="1.5 1"/><path d="M15.5 2l3 5h-6z" fill="#9ed07e"/><path d="M1 13v8h19M2 18l2-3 2 4 2-5 2 4 2-3 2 4 2-4 2 3" fill="none" stroke="#3090e0" stroke-width="1.5"/></svg>
<svg class="a" style="left:593px;top:134px" width="23" height="23" viewBox="0 0 23 23"><path d="M1 4L11.5 0L22 4V19L11.5 23L1 19Z" fill="#e4e4e4"/><path d="M1 4L11.5 8L22 4" fill="none" stroke="#ccc"/><path d="M11.5 6v15M5 9l13 8M18 9L5 17" stroke="#aaa" stroke-width="0.8"/></svg>
<svg class="a" style="left:627px;top:135px" width="22" height="20" viewBox="0 0 22 20"><text x="0" y="16" font-size="19" font-family="Liberation Sans" fill="#8a939c">{</text><text x="15" y="16" font-size="19" font-family="Liberation Sans" fill="#8a939c">}</text><circle cx="7" cy="14" r="1.5" fill="#3090e0"/><circle cx="11" cy="14" r="1.5" fill="#3090e0"/><circle cx="15" cy="14" r="1.5" fill="#3090e0"/></svg>
<svg class="a" style="left:663px;top:137px" width="5" height="18" viewBox="0 0 5 18"><rect x="0" y="0" width="2" height="2" fill="#9aa2aa"/><rect x="3" y="0" width="2" height="2" fill="#9aa2aa"/><rect x="0" y="3" width="2" height="2" fill="#9aa2aa"/><rect x="3" y="3" width="2" height="2" fill="#9aa2aa"/><rect x="0" y="6" width="2" height="2" fill="#9aa2aa"/><rect x="3" y="6" width="2" height="2" fill="#9aa2aa"/><rect x="0" y="9" width="2" height="2" fill="#9aa2aa"/><rect x="3" y="9" width="2" height="2" fill="#9aa2aa"/><rect x="0" y="12" width="2" height="2" fill="#9aa2aa"/><rect x="3" y="12" width="2" height="2" fill="#9aa2aa"/><rect x="0" y="15" width="2" height="2" fill="#9aa2aa"/><rect x="3" y="15" width="2" height="2" fill="#9aa2aa"/></svg>
<svg class="a" style="left:676px;top:134px" width="22" height="22" viewBox="0 0 22 22"><path d="M0 18L17 1 22 6 5 23Z" fill="#f0c000"/><path d="M4 15l2 2M6 13l1.5 1.5M8 11l2 2M10 9l1.5 1.5M12 7l2 2M14 5l1.5 1.5" stroke="#9a7a00" stroke-width="0.9"/></svg>
<svg class="a" style="left:709px;top:133px" width="23" height="24" viewBox="0 0 23 24"><g transform="rotate(-35 12 13)"><path d="M1 15A11 11 0 0 1 23 15Z" fill="#f0c000"/><path d="M7.5 15A4.5 4.5 0 0 1 16.5 15Z" fill="#47505a"/><path d="M1 15A11 11 0 0 1 23 15" fill="none" stroke="#9a7a00" stroke-width="1.2" stroke-dasharray="0.8 1.6"/></g></svg>
<svg class="a" style="left:1118px;top:199px" width="17" height="19" viewBox="0 0 17 19"><rect x="1" y="3" width="15" height="11" rx="2" fill="#d0d0d0"/><rect x="5" y="1" width="6" height="3" fill="#bbb"/><circle cx="8.5" cy="8.5" r="3.5" fill="#a8d8f0" stroke="#999" stroke-width="1.2"/><path d="M3 18q1-6 7-5" fill="none" stroke="#e02020" stroke-width="2.2"/><path d="M0 15l4 4 1-5z" fill="#e02020"/></svg>
<svg class="a" style="left:1145px;top:199px" width="17" height="19" viewBox="0 0 17 19"><rect x="1" y="3" width="15" height="11" rx="2" fill="#c8c8c8"/><circle cx="8.5" cy="8.5" r="3.5" fill="#aaa" stroke="#ccc"/><path d="M14 18q-1-6-7-5" fill="none" stroke="#c8c8c8" stroke-width="2.2"/></svg>
<div class="a" style="left:1171px;top:200px;width:1px;height:18px;background:#3d454d"></div>
<svg class="a" style="left:1178px;top:199px" width="18" height="19" viewBox="0 0 18 19"><path d="M0 4h3M15 4h3M0 17h3M15 17h3" stroke="#8a939c"/><rect x="2" y="4" width="15" height="11" rx="2" fill="#d0d0d0"/><rect x="5" y="1" width="6" height="3" fill="#bbb"/><circle cx="8.5" cy="8.5" r="3.5" fill="#a8d8f0" stroke="#999" stroke-width="1.2"/></svg>
<div class="a" style="left:1205px;top:200px;width:1px;height:18px;background:#3d454d"></div>
<div class="t" style="left:1214px;top:204.27px;font-size:11.5px;color:#7b7a56">3D</div>
<svg class="a" style="left:1240px;top:199px" width="17" height="19" viewBox="0 0 17 19"><rect x="1" y="3" width="15" height="11" rx="2" fill="#d0d0d0"/><rect x="5" y="1" width="6" height="3" fill="#bbb"/><circle cx="8.5" cy="8.5" r="3.5" fill="#a8d8f0" stroke="#999" stroke-width="1.2"/><path d="M10 11l6 7" stroke="#f0c000" stroke-width="2.4"/></svg>
<div class="a" style="left:1265px;top:200px;width:1px;height:18px;background:#3d454d"></div>
<svg class="a" style="left:1274px;top:199px" width="17" height="18" viewBox="0 0 17 18"><rect x="0.5" y="0.5" width="16" height="17" fill="none" stroke="#9aa0a6" stroke-width="0.8" stroke-dasharray="2 2"/><path d="M8.5 4v10M3.5 9h10" stroke="#9ed07e" stroke-width="2.4"/></svg>
<svg class="a" style="left:1301px;top:199px" width="17" height="18" viewBox="0 0 17 18"><rect x="0.5" y="0.5" width="16" height="17" fill="none" stroke="#9aa0a6" stroke-width="0.8" stroke-dasharray="2 2"/><path d="M3.5 9h10" stroke="#e02020" stroke-width="2.4"/></svg>
<svg class="a" style="left:1327px;top:199px" width="17" height="18" viewBox="0 0 17 18"><rect x="0.5" y="0.5" width="16" height="17" fill="none" stroke="#9aa0a6" stroke-width="0.8" stroke-dasharray="2 2"/><path d="M5 2v7M1.5 5.5h7" stroke="#9ed07e" stroke-width="2"/><path d="M2 12h7" stroke="#e02020" stroke-width="2"/><path d="M11 11l5 5" stroke="#aaa" stroke-width="1.4"/></svg>
<div class="a" style="left:1354px;top:200px;width:1px;height:18px;background:#3d454d"></div>
<svg class="a" style="left:1362px;top:199px" width="17" height="18" viewBox="0 0 17 18"><rect x="0.5" y="0.5" width="16" height="17" fill="none" stroke="#9aa0a6" stroke-width="0.8" stroke-dasharray="2 2"/><path d="M8 3l6 11H2z" fill="#9ed07e"/><path d="M12 12l4 5" stroke="#aaa" stroke-width="1.3"/></svg>
<svg class="a" style="left:1389px;top:199px" width="17" height="18" viewBox="0 0 17 18"><rect x="0.5" y="0.5" width="16" height="17" fill="none" stroke="#9aa0a6" stroke-width="0.8" stroke-dasharray="2 2"/><path d="M8 3l6 11H2z" fill="none" stroke="#e0e0e0" stroke-width="1.1"/><path d="M12 12l4 5" stroke="#aaa" stroke-width="1.3"/></svg>
<svg class="a" style="left:1416px;top:199px" width="17" height="18" viewBox="0 0 17 18"><rect x="0.5" y="0.5" width="16" height="17" fill="none" stroke="#9aa0a6" stroke-width="0.8" stroke-dasharray="2 2"/><path d="M2 6l8-3 6 3v6l-8 3-6-3z" fill="#9ed07e"/><path d="M2 6l8 2 6-2M10 8v7" stroke="#6a9a50" fill="none" stroke-width="0.7"/></svg>
<svg class="a" style="left:1443px;top:199px" width="17" height="18" viewBox="0 0 17 18"><rect x="0.5" y="0.5" width="16" height="17" fill="none" stroke="#9aa0a6" stroke-width="0.8" stroke-dasharray="2 2"/><path d="M2 6l8-3 6 3v6l-8 3-6-3z" fill="none" stroke="#ddd" stroke-width="0.9"/><path d="M2 6l8 2 6-2" stroke="#e02020" fill="none" stroke-width="0.9"/></svg>
<svg class="a" style="left:1469px;top:199px" width="17" height="18" viewBox="0 0 17 18"><rect x="0.5" y="0.5" width="16" height="17" fill="none" stroke="#9aa0a6" stroke-width="0.8" stroke-dasharray="2 2"/><path d="M3 9l9-4v8z" fill="#9ed07e"/></svg>
<svg class="a" style="left:1496px;top:199px" width="17" height="18" viewBox="0 0 17 18"><rect x="0.5" y="0.5" width="16" height="17" fill="none" stroke="#9aa0a6" stroke-width="0.8" stroke-dasharray="2 2"/><circle cx="4" cy="5" r="1.3" fill="#e03020"/><circle cx="8" cy="4" r="1.3" fill="#e03020"/><circle cx="12" cy="7" r="1.3" fill="#e03020"/><circle cx="5" cy="10" r="1.3" fill="#e03020"/><circle cx="9" cy="11" r="1.3" fill="#e03020"/><circle cx="13" cy="13" r="1.3" fill="#e03020"/><circle cx="7" cy="14" r="1.3" fill="#e03020"/></svg>
<svg class="a" style="left:1523px;top:199px" width="17" height="18" viewBox="0 0 17 18"><rect x="0.5" y="0.5" width="16" height="17" fill="none" stroke="#9aa0a6" stroke-width="0.8" stroke-dasharray="2 2"/><circle cx="5" cy="6" r="2" fill="#3090e0"/><circle cx="5" cy="12" r="2" fill="#3090e0"/><circle cx="11" cy="10" r="3" fill="#9ed07e"/></svg>
<svg class="a" style="left:1551px;top:199px" width="17" height="19" viewBox="0 0 17 19"><path d="M1 5l6-4h9v11l-6 5H1z" fill="#d8d8d8"/><path d="M1 5h9v12M10 5l6-4" stroke="#aaa" fill="none"/><path d="M11 11l5 7" stroke="#bbb" stroke-width="1.5"/></svg>
<svg class="a" style="left:1581px;top:203px" width="13" height="13" viewBox="0 0 13 13"><circle cx="3.5" cy="3.5" r="3" fill="#e8e8e8"/><path d="M6 6l6 6" stroke="#aaa" stroke-width="1.5"/></svg>
<svg class="a" style="left:1607px;top:200px" width="15" height="17" viewBox="0 0 15 17"><path d="M6 0l6 11H0z" fill="#9ed07e"/><path d="M9 10l5 6" stroke="#aaa" stroke-width="1.4"/></svg>
<svg class="a" style="left:1633px;top:200px" width="15" height="17" viewBox="0 0 15 17"><path d="M6 0l6 11H0z" fill="none" stroke="#e8e8e8" stroke-width="1.1"/><path d="M9 10l5 6" stroke="#aaa" stroke-width="1.4"/></svg>
<svg class="a" style="left:1658px;top:199px" width="17" height="18" viewBox="0 0 17 18"><path d="M5 7l5 10H0z" fill="#30b040"/><text x="9" y="11" font-size="13" font-family="Liberation Sans" fill="#8a8a5a">?</text></svg>
<svg class="a" style="left:1687px;top:199px" width="15" height="18" viewBox="0 0 15 18"><circle cx="3" cy="14" r="2.8" fill="#e02020"/><text x="6" y="11" font-size="13" font-family="Liberation Sans" fill="#8a8a5a">?</text></svg>
<svg class="a" style="left:1714px;top:201px" width="14" height="14" viewBox="0 0 14 14"><path d="M7 0v14M0 7h14" stroke="#2aa0e8" stroke-width="4"/></svg>
<svg class="a" style="left:1740px;top:205px" width="16" height="5" viewBox="0 0 16 5"><rect x="0" y="0" width="16" height="5" fill="#bfc3c7"/></svg>
<svg class="a" style="left:1767px;top:199px" width="15" height="19" viewBox="0 0 15 19"><rect x="1" y="4" width="13" height="15" rx="1" fill="#b8bcbf"/><rect x="0" y="1" width="15" height="3" rx="1" fill="#cfd2d4"/><path d="M4 6v11M7.5 6v11M11 6v11" stroke="#999" stroke-width="0.8"/></svg>
</body></html>
